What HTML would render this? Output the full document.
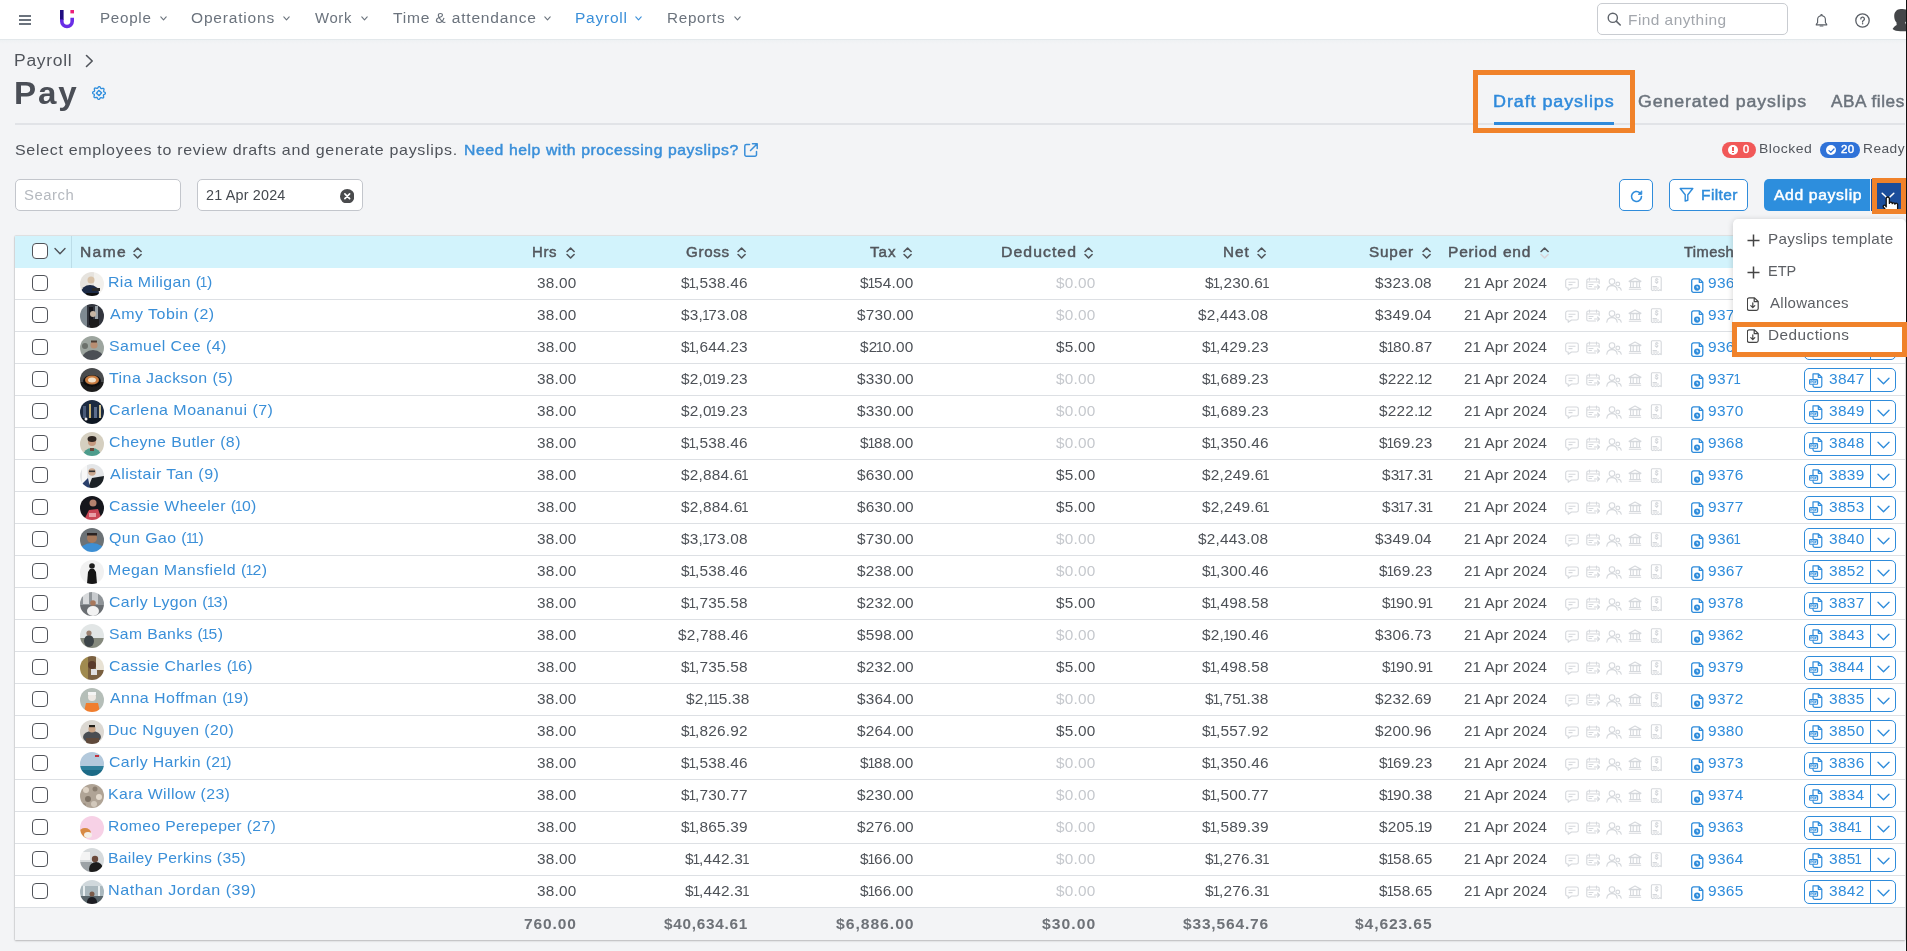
<!DOCTYPE html><html><head><meta charset='utf-8'><title>Pay</title><style>
*{box-sizing:border-box}
html,body{margin:0;padding:0}
body{width:1907px;height:951px;overflow:hidden;background:#f3f4f6;position:relative;font-family:"Liberation Sans",sans-serif;color:#4b4f56}
.a{position:absolute;white-space:nowrap}
svg{display:block}
#nav{position:absolute;left:0;top:0;width:1907px;height:40px;background:#fff;border-bottom:1px solid #e3e8eb}
.ham{position:absolute;left:19px;width:12px;height:2px;background:#6b737d}
.nv{position:absolute;top:10px;font-size:14px;line-height:16px;color:#6b737d;letter-spacing:1.1px}
.chev{position:absolute;top:16px}
#find{position:absolute;left:1597px;top:3px;width:191px;height:32px;border:1px solid #c9ccd1;border-radius:5px;background:#fff}
.tabline{position:absolute;left:15px;top:123px;width:1890px;height:2px;background:#e1e3e7}
.tab{position:absolute;top:93px;font-size:16px;line-height:18px;font-weight:700;letter-spacing:0.9px;color:#6b737c}
.inp{position:absolute;top:179px;height:32px;border:1px solid #c3c6cc;border-radius:5px;background:#fff}
.btn{position:absolute;top:179px;height:32px;border:1px solid #2f8cdb;border-radius:5px;background:#fff}
#tbl{position:absolute;left:15px;top:236px;width:1890px;height:704px;background:#fff;box-shadow:0 1px 2px rgba(0,0,0,.22),-1px 0 0 rgba(0,0,0,.06)}
#thead{position:absolute;left:0;top:0;width:1890px;height:32px;background:#d3f2fb}
.th{position:absolute;top:9px;font-size:14px;line-height:16px;font-weight:700;color:#52565c;letter-spacing:0.7px}
.row{position:absolute;left:0;width:1890px;height:32px;border-bottom:1px solid #e3e6ea}
.cb{position:absolute;left:17px;width:16px;height:16px;border:1.5px solid #505359;border-radius:4px;background:#fff}
.av{position:absolute;left:65px;top:4px;width:24px;height:24px;border-radius:50%}
.nm{position:absolute;left:94px;top:6px;font-size:14px;line-height:16px;color:#3a8fd8;letter-spacing:0.9px}
.v{position:absolute;top:8px;font-size:14px;line-height:16px;color:#4b4f56;letter-spacing:0.5px;text-align:right}
.v0{color:#c3c6cb}
.ic{position:absolute;top:0}
.ts{position:absolute;left:1676px;top:8px}
.tsn{position:absolute;left:1692px;top:8px;font-size:14px;line-height:16px;color:#2f8cdb;letter-spacing:0.6px}
.ps{position:absolute;left:1789px;top:4px;width:92px;height:24px;border:1px solid #2f8cdb;border-radius:5px;background:#fff}
.tot{position:absolute;top:680px;left:0;width:1890px;height:32px;background:#f3f4f6}
.tv{position:absolute;top:8px;font-size:14px;line-height:16px;font-weight:700;color:#6b6f76;letter-spacing:0.9px}
.obox{position:absolute;border:5px solid #f0822a}
#menu{position:absolute;left:1733px;top:219px;width:173px;height:133px;background:#fff;border-radius:5px;box-shadow:0 2px 8px rgba(0,0,0,.15)}
.mi{position:absolute;left:36px;font-size:14px;line-height:16px;color:#585b60;letter-spacing:0.7px}
</style></head><body><svg width="0" height="0" style="position:absolute">
<defs><clipPath id="avc"><circle cx="12" cy="12" r="12"/></clipPath><filter id="avb" x="-10%" y="-10%" width="120%" height="120%"><feGaussianBlur stdDeviation=".45"/></filter>
<symbol id="sort" viewBox="0 0 9 12"><path d="M1 4.5L4.5 1L8 4.5M1 7.5L4.5 11L8 7.5" fill="none" stroke="currentColor" stroke-width="1.6" stroke-linecap="round" stroke-linejoin="round"/></symbol>
<symbol id="sortup" viewBox="0 0 9 12"><path d="M1 4.5L4.5 1L8 4.5" fill="none" stroke="#52565c" stroke-width="1.6" stroke-linecap="round" stroke-linejoin="round"/><path d="M1 7.5L4.5 11L8 7.5" fill="none" stroke="#d9d3d8" stroke-width="1.6" stroke-linecap="round" stroke-linejoin="round"/></symbol>
<symbol id="chd" viewBox="0 0 12 8"><path d="M1 1.5L6 6.5L11 1.5" fill="none" stroke="currentColor" stroke-width="1.5" stroke-linecap="round" stroke-linejoin="round"/></symbol>
<symbol id="chat" viewBox="0 0 14 13"><path d="M2.5 1h9A1.8 1.8 0 0 1 13.3 2.8v5.4A1.8 1.8 0 0 1 11.5 10H6.5L3.2 12.3V10H2.5A1.8 1.8 0 0 1 .7 8.2V2.8A1.8 1.8 0 0 1 2.5 1z M3.5 4.2h7 M3.5 6.6h4" fill="none" stroke="currentColor" stroke-width="1.1" stroke-linejoin="round"/></symbol>
<symbol id="cal" viewBox="0 0 14 14"><path d="M9.5 12H2.3A1.5 1.5 0 0 1 .8 10.5V3.5A1.5 1.5 0 0 1 2.3 2h9.4a1.5 1.5 0 0 1 1.5 1.5v3 M3.5 1v2.2 M10.5 1v2.2 M.8 5h12.4 M3 7.5h4 M3 9.5h2.5 M8.5 10h5 M11.5 8l2 2-2 2" fill="none" stroke="currentColor" stroke-width="1.1" stroke-linecap="round" stroke-linejoin="round"/></symbol>
<symbol id="ppl" viewBox="0 0 16 13"><circle cx="6" cy="3.6" r="2.8" fill="none" stroke="currentColor" stroke-width="1.1"/><path d="M.8 12.2c.3-3 2.3-4.6 5.2-4.6s4.9 1.6 5.2 4.6" fill="none" stroke="currentColor" stroke-width="1.1" stroke-linecap="round"/><circle cx="11.8" cy="6" r="1.9" fill="none" stroke="currentColor" stroke-width="1.1"/><path d="M12.3 9.3c1.7.2 2.7 1.3 2.9 3" fill="none" stroke="currentColor" stroke-width="1.1" stroke-linecap="round"/></symbol>
<symbol id="bank" viewBox="0 0 14 13"><path d="M1 4.2L7 1l6 3.2z M1 4.6h12 M2.6 5v5 M5.2 5v5 M8.8 5v5 M11.4 5v5 M1.3 10.5h11.4 M.8 12.3h12.4" fill="none" stroke="currentColor" stroke-width="1.1" stroke-linejoin="round"/></symbol>
<symbol id="rcpt" viewBox="0 0 12 16"><path d="M2.2 .8h7.6a1.4 1.4 0 0 1 1.4 1.4V14.6l-1.4-.9-1.4.9-1.4-.9-1.4.9-1.4-.9-1.4.9-1.4-.9V2.2A1.4 1.4 0 0 1 2.2.8z M3 10.5h3.5 M3 12h5.5 M8 3.5c-.3-.5-.9-.7-1.5-.6-.7.1-1 .6-.9 1 .1.5.6.6 1.2.8.7.2 1.2.5 1.1 1.1-.1.6-.8.9-1.5.8-.6-.1-1-.4-1.2-.8 M6.8 2.2v.7 M6.8 6.8v.7" fill="none" stroke="currentColor" stroke-width="1.1" stroke-linecap="round" stroke-linejoin="round"/></symbol>
<symbol id="tsic" viewBox="0 0 13 15"><path d="M2.5 .9h6l3.3 3.3v8.3A1.8 1.8 0 0 1 10 14.3H2.5A1.8 1.8 0 0 1 .7 12.5V2.7A1.8 1.8 0 0 1 2.5.9z M8.3 1v3.3h3.3" fill="none" stroke="currentColor" stroke-width="1.3" stroke-linejoin="round"/><circle cx="6.1" cy="9.6" r="3.1" fill="currentColor"/><path d="M6.1 8v1.8h1.3" fill="none" stroke="#fff" stroke-width=".9"/></symbol>
<symbol id="pdf" viewBox="0 0 15 15"><path d="M4 .9h5.5l3.3 3.3v8.3A1.8 1.8 0 0 1 11 14.3H5.8A1.8 1.8 0 0 1 4 12.5z M9.3 1v3.3h3.3" fill="none" stroke="currentColor" stroke-width="1.2" stroke-linejoin="round"/><rect x=".6" y="6.6" width="8" height="4.6" rx=".8" fill="#fff" stroke="currentColor" stroke-width="1.1"/><path d="M1.8 10V7.8h1.1a.6.6 0 0 1 0 1.2H1.8 M4.2 10V7.8h.8a1.1 1.1 0 0 1 0 2.2z M6.6 10V7.8h1.3 M6.6 8.9h1" fill="none" stroke="currentColor" stroke-width=".7"/></symbol>
<symbol id="fdl" viewBox="0 0 12 14"><path d="M2.2 .8h5.3l3.7 3.7v7a1.8 1.8 0 0 1-1.8 1.8H2.2A1.8 1.8 0 0 1 .4 11.5V2.6A1.8 1.8 0 0 1 2.2.8z M7.2 .9v3.8h3.9 M5.8 5.8v4.6 M3.8 8.6l2 2 2-2" fill="none" stroke="currentColor" stroke-width="1.2" stroke-linecap="round" stroke-linejoin="round"/></symbol>
<symbol id="plus" viewBox="0 0 13 13"><path d="M6.5 .5v12 M.5 6.5h12" fill="none" stroke="currentColor" stroke-width="1.5"/></symbol>
</defs></svg><div id="nav"></div><div class="a" style="left:0;top:40px;width:1907px;height:4px;background:linear-gradient(#eef1f3,#f3f4f6)"></div><div class="ham" style="top:15px"></div><div class="ham" style="top:19px"></div><div class="ham" style="top:23px"></div><svg class="a" style="left:59px;top:9px" width="16" height="20" viewBox="0 0 16 20">
<path d="M1 1.2h3.6v9.3" fill="none" stroke="#1d0a7e" stroke-width="0" />
<rect x="1" y="1" width="3.6" height="10" fill="#1f0d80"/>
<path d="M1 10.5v1.8a6 6 0 0 0 14 0v-3.6h-3.6v3.6a2.4 2.4 0 0 1-6.8 0v-1.8z" fill="#6a2ee6"/>
<rect x="11.4" y="1" width="3.6" height="3.4" fill="#ec1f7a"/>
</svg><div class="a" style="left:99.62px;top:11px;font-size:14px;line-height:14px;color:#6b737d;letter-spacing:0.655px;transform:scaleX(1.0845);transform-origin:0 0;will-change:transform;">People</div><svg class="a" style="left:159.8px;top:16px" width="7" height="5" viewBox="0 0 7 5"><path d="M.8 .9L3.5 3.8L6.2 .9" fill="none" stroke="#6b737d" stroke-width="1.1" stroke-linecap="round" stroke-linejoin="round"/></svg><div class="a" style="left:190.55px;top:11px;font-size:14px;line-height:14px;color:#6b737d;letter-spacing:0.736px;transform:scaleX(1.1089);transform-origin:0 0;will-change:transform;">Operations</div><svg class="a" style="left:282.8px;top:16px" width="7" height="5" viewBox="0 0 7 5"><path d="M.8 .9L3.5 3.8L6.2 .9" fill="none" stroke="#6b737d" stroke-width="1.1" stroke-linecap="round" stroke-linejoin="round"/></svg><div class="a" style="left:314.60px;top:11px;font-size:14px;line-height:14px;color:#6b737d;letter-spacing:0.628px;transform:scaleX(1.0615);transform-origin:0 0;will-change:transform;">Work</div><svg class="a" style="left:360.5px;top:16px" width="7" height="5" viewBox="0 0 7 5"><path d="M.8 .9L3.5 3.8L6.2 .9" fill="none" stroke="#6b737d" stroke-width="1.1" stroke-linecap="round" stroke-linejoin="round"/></svg><div class="a" style="left:392.82px;top:11px;font-size:14px;line-height:14px;color:#6b737d;letter-spacing:0.727px;transform:scaleX(1.1112);transform-origin:0 0;will-change:transform;">Time &amp; attendance</div><svg class="a" style="left:544.3px;top:16px" width="7" height="5" viewBox="0 0 7 5"><path d="M.8 .9L3.5 3.8L6.2 .9" fill="none" stroke="#6b737d" stroke-width="1.1" stroke-linecap="round" stroke-linejoin="round"/></svg><div class="a" style="left:575.49px;top:11px;font-size:14px;line-height:14px;color:#3a8fd9;letter-spacing:0.669px;transform:scaleX(1.1085);transform-origin:0 0;will-change:transform;">Payroll</div><svg class="a" style="left:635.2px;top:16px" width="7" height="5" viewBox="0 0 7 5"><path d="M.8 .9L3.5 3.8L6.2 .9" fill="none" stroke="#3a8fd9" stroke-width="1.1" stroke-linecap="round" stroke-linejoin="round"/></svg><div class="a" style="left:666.51px;top:11px;font-size:14px;line-height:14px;color:#6b737d;letter-spacing:0.643px;transform:scaleX(1.0884);transform-origin:0 0;will-change:transform;">Reports</div><svg class="a" style="left:733.7px;top:16px" width="7" height="5" viewBox="0 0 7 5"><path d="M.8 .9L3.5 3.8L6.2 .9" fill="none" stroke="#6b737d" stroke-width="1.1" stroke-linecap="round" stroke-linejoin="round"/></svg><div id="find"></div><svg class="a" style="left:1607px;top:12px" width="15" height="14" viewBox="0 0 15 14"><circle cx="5.8" cy="5.8" r="4.6" fill="none" stroke="#5f646b" stroke-width="1.4"/><path d="M9.2 9.2L13.2 13" stroke="#5f646b" stroke-width="1.6" stroke-linecap="round"/></svg><div class="a" style="left:1627.67px;top:13px;font-size:14.5px;line-height:14.5px;color:#a3a7ad;letter-spacing:0.430px;transform:scaleX(1.0647);transform-origin:0 0;will-change:transform;">Find anything</div><svg class="a" style="left:1814.5px;top:12.5px" width="13" height="15" viewBox="0 0 16 17"><path d="M8 1.2c.5 0 .8.3.8.8v.6c2.4.4 4 2.4 4 4.9v3.6l1.6 2v.8H1.6v-.8l1.6-2V7.5c0-2.5 1.6-4.5 4-4.9V2c0-.5.3-.8.8-.8z" fill="none" stroke="#5a5f66" stroke-width="1.4" stroke-linejoin="round"/><path d="M6.3 15.2h3.4" fill="none" stroke="#5a5f66" stroke-width="1.4" stroke-linecap="round"/></svg><svg class="a" style="left:1855px;top:12.5px" width="15" height="15" viewBox="0 0 15 15"><circle cx="7.5" cy="7.5" r="6.7" fill="none" stroke="#5a5f66" stroke-width="1.3"/><path d="M5.8 5.9a1.8 1.8 0 1 1 2.6 1.6c-.5.3-.8.6-.8 1.1v.5" fill="none" stroke="#5a5f66" stroke-width="1.3" stroke-linecap="round"/><circle cx="7.6" cy="10.7" r=".75" fill="#5a5f66"/></svg><svg class="a" style="left:1891px;top:8px" width="16" height="24" viewBox="0 0 16 24"><path d="M9.8 1.1C6 1.1 3.2 3.9 3.2 8c0 2.8.9 5 2.2 6.3l.3 2.6c-1.7.9-3.4 2.4-4.1 4.2 1.6 1.6 4.6 2.2 7.8 2.2H16V2c-1.5-.6-3.8-.9-6.2-.9z" fill="#444649"/><path d="M14.2 14.3c.3 1.3.9 2.6 1.8 3.4V12.5c-.6.7-1.2 1.3-1.8 1.8z" fill="#fff"/></svg><div class="a" style="left:14.03px;top:53px;font-size:16px;line-height:16px;color:#50545b;letter-spacing:0.656px;transform:scaleX(1.0925);transform-origin:0 0;will-change:transform;">Payroll</div><svg class="a" style="left:85px;top:54px" width="9" height="14" viewBox="0 0 9 14"><path d="M1.5 1.5L7.2 7L1.5 12.5" fill="none" stroke="#50545b" stroke-width="1.6" stroke-linecap="round" stroke-linejoin="round"/></svg><div class="a" style="left:14.26px;top:78px;font-size:31px;line-height:31px;font-weight:700;color:#4a4e56;letter-spacing:1.729px;transform:scaleX(1.0698);transform-origin:0 0;will-change:transform;">Pay</div><svg class="a" style="left:92px;top:86px" width="14" height="14" viewBox="0 0 14 14"><path d="M13.45 7.00 L13.47 7.42 L13.26 7.82 L12.86 8.17 L12.37 8.44 L11.91 8.67 L11.57 8.89 L11.41 9.17 L11.41 9.54 L11.51 10.01 L11.63 10.55 L11.67 11.10 L11.56 11.56 L11.28 11.88 L10.84 12.01 L10.32 11.97 L9.78 11.82 L9.29 11.65 L8.89 11.57 L8.58 11.65 L8.32 11.91 L8.06 12.32 L7.76 12.79 L7.41 13.20 L7.00 13.45 L6.58 13.47 L6.18 13.26 L5.83 12.86 L5.56 12.37 L5.33 11.91 L5.11 11.57 L4.83 11.41 L4.46 11.41 L3.99 11.51 L3.45 11.63 L2.90 11.67 L2.44 11.56 L2.12 11.28 L1.99 10.84 L2.03 10.32 L2.18 9.78 L2.35 9.29 L2.43 8.89 L2.35 8.58 L2.09 8.32 L1.68 8.06 L1.21 7.76 L0.80 7.41 L0.55 7.00 L0.53 6.58 L0.74 6.18 L1.14 5.83 L1.63 5.56 L2.09 5.33 L2.43 5.11 L2.59 4.83 L2.59 4.46 L2.49 3.99 L2.37 3.45 L2.33 2.90 L2.44 2.44 L2.72 2.12 L3.16 1.99 L3.68 2.03 L4.22 2.18 L4.71 2.35 L5.11 2.43 L5.42 2.35 L5.68 2.09 L5.94 1.68 L6.24 1.21 L6.59 0.80 L7.00 0.55 L7.42 0.53 L7.82 0.74 L8.17 1.14 L8.44 1.63 L8.67 2.09 L8.89 2.43 L9.17 2.59 L9.54 2.59 L10.01 2.49 L10.55 2.37 L11.10 2.33 L11.56 2.44 L11.88 2.72 L12.01 3.16 L11.97 3.68 L11.82 4.22 L11.65 4.71 L11.57 5.11 L11.65 5.42 L11.91 5.68 L12.32 5.94 L12.79 6.24 L13.20 6.59z" fill="none" stroke="#2f8edd" stroke-width="1.3" stroke-linejoin="round"/><path d="M9.59 6.77 L7.23 9.59 L4.41 7.23 L6.77 4.41z" fill="none" stroke="#2f8edd" stroke-width="1.4" stroke-linejoin="round"/></svg><div class="tabline"></div><div class="a" style="left:1493.05px;top:94px;font-size:16px;line-height:16px;font-weight:400;-webkit-text-stroke:.45px currentColor;color:#2f8adb;letter-spacing:0.808px;transform:scaleX(1.1233);transform-origin:0 0;will-change:transform;">Draft payslips</div><div class="a" style="left:1494px;top:122px;width:120px;height:3px;background:#2f8adb"></div><div class="a" style="left:1638.02px;top:94px;font-size:16px;line-height:16px;font-weight:400;-webkit-text-stroke:.45px currentColor;color:#6b737c;letter-spacing:0.801px;transform:scaleX(1.1104);transform-origin:0 0;will-change:transform;">Generated payslips</div><div class="a" style="left:1831.24px;top:94px;font-size:16px;line-height:16px;font-weight:400;-webkit-text-stroke:.45px currentColor;color:#6b737c;letter-spacing:0.539px;transform:scaleX(1.0723);transform-origin:0 0;will-change:transform;">ABA files</div><div class="obox" style="left:1473px;top:70px;width:162px;height:63px"></div><div class="a" style="left:14.67px;top:143px;font-size:14.5px;line-height:14.5px;color:#4f535a;letter-spacing:0.620px;transform:scaleX(1.1032);transform-origin:0 0;will-change:transform;">Select employees to review drafts and generate payslips.</div><div class="a" style="left:464.49px;top:143px;font-size:14.5px;line-height:14.5px;font-weight:400;-webkit-text-stroke:.45px currentColor;color:#3a8fd9;letter-spacing:0.536px;transform:scaleX(1.0847);transform-origin:0 0;will-change:transform;">Need help with processing payslips?</div><svg class="a" style="left:743px;top:142px" width="16" height="16" viewBox="0 0 16 16"><path d="M6.5 2.5H3.3a1.5 1.5 0 0 0-1.5 1.5v8.7a1.5 1.5 0 0 0 1.5 1.5H12a1.5 1.5 0 0 0 1.5-1.5V9.5 M9.5 1.8h4.7v4.7 M14 2L7.5 8.5" fill="none" stroke="#3a8fd9" stroke-width="1.5" stroke-linecap="round" stroke-linejoin="round"/></svg><div class="a" style="left:1722px;top:142px;width:34px;height:16px;border-radius:8px;background:#f15858"></div><div class="a" style="left:1727.5px;top:144.8px;width:10.5px;height:10.5px;border-radius:50%;background:#fff"></div><div class="a" style="left:1732.1px;top:146.6px;width:1.6px;height:4.2px;background:#f15858"></div><div class="a" style="left:1732.1px;top:151.8px;width:1.6px;height:1.6px;background:#f15858"></div><div class="a" style="left:1743.32px;top:144px;font-size:11px;line-height:11px;font-weight:400;-webkit-text-stroke:.45px currentColor;color:#fff;letter-spacing:0.000px;will-change:transform;">0</div><div class="a" style="left:1758.63px;top:142px;font-size:13px;line-height:13px;color:#52565d;letter-spacing:0.505px;transform:scaleX(1.0730);transform-origin:0 0;will-change:transform;">Blocked</div><div class="a" style="left:1820px;top:142px;width:40px;height:16px;border-radius:8px;background:#2f72d8"></div><div class="a" style="left:1825.7px;top:144.8px;width:10.5px;height:10.5px;border-radius:50%;background:#fff"></div><svg class="a" style="left:1825.7px;top:144.8px" width="11" height="11" viewBox="0 0 11 11"><path d="M3 5.6l1.8 1.8L8 4" fill="none" stroke="#2f72d8" stroke-width="1.3" stroke-linecap="round" stroke-linejoin="round"/></svg><div class="a" style="left:1840.71px;top:144px;font-size:11px;line-height:11px;font-weight:400;-webkit-text-stroke:.45px currentColor;color:#fff;letter-spacing:0.433px;transform:scaleX(1.0385);transform-origin:0 0;will-change:transform;">20</div><div class="a" style="left:1862.65px;top:142px;font-size:13px;line-height:13px;color:#52565d;letter-spacing:0.463px;transform:scaleX(1.0534);transform-origin:0 0;will-change:transform;">Ready</div><div class="inp" style="left:15px;width:166px"></div><div class="a" style="left:23.50px;top:188px;font-size:14px;line-height:14px;color:#b5b9bf;letter-spacing:0.495px;transform:scaleX(1.0614);transform-origin:0 0;will-change:transform;">Search</div><div class="inp" style="left:197px;width:166px"></div><div class="a" style="left:205.53px;top:188px;font-size:14px;line-height:14px;color:#45494f;letter-spacing:0.185px;transform:scaleX(1.0255);transform-origin:0 0;will-change:transform;">21 Apr 2024</div><svg class="a" style="left:339.8px;top:188.8px" width="14.5" height="14.5" viewBox="0 0 14 14"><circle cx="7" cy="7" r="7" fill="#4a4b4d"/><path d="M4.7 4.7l4.6 4.6M9.3 4.7L4.7 9.3" stroke="#fff" stroke-width="1.6" stroke-linecap="round"/></svg><div class="btn" style="left:1619px;width:34px"></div><svg class="a" style="left:1628.5px;top:188.5px" width="15" height="15" viewBox="0 0 15 15"><path d="M12.5 7.5a5 5 0 1 1-1.6-3.7" fill="none" stroke="#2f8cdb" stroke-width="1.6" stroke-linecap="round"/><path d="M12.8 1.8v3.6H9.2z" fill="#2f8cdb" stroke="#2f8cdb" stroke-width=".8" stroke-linejoin="round"/></svg><div class="btn" style="left:1669px;width:79px"></div><svg class="a" style="left:1678.5px;top:187px" width="15" height="15" viewBox="0 0 15 15"><path d="M1.2 1.5h12.6L8.8 7.7v5.6L6.2 14V7.7z" fill="none" stroke="#2f8cdb" stroke-width="1.4" stroke-linejoin="round"/></svg><div class="a" style="left:1700.91px;top:188px;font-size:14.5px;line-height:14.5px;font-weight:400;-webkit-text-stroke:.45px currentColor;color:#2f8cdb;letter-spacing:0.398px;transform:scaleX(1.0676);transform-origin:0 0;will-change:transform;">Filter</div><div class="a" style="left:1764px;top:179px;width:107px;height:32px;background:#2d8edd;border-radius:5px 0 0 5px"></div><div class="a" style="left:1870px;top:179px;width:1px;height:32px;background:#eef5fb"></div><div class="a" style="left:1871px;top:179px;width:1px;height:32px;background:#1c4e9b"></div><div class="a" style="left:1773.74px;top:188px;font-size:14.5px;line-height:14.5px;font-weight:400;-webkit-text-stroke:.45px currentColor;color:#fff;letter-spacing:0.579px;transform:scaleX(1.0837);transform-origin:0 0;will-change:transform;">Add payslip</div><div class="a" style="left:1872px;top:178px;width:35px;height:36px;background:#f0822a"></div><div class="a" style="left:1877px;top:183px;width:24px;height:26px;background:#1c4e9b"></div><svg class="a" style="left:1881px;top:191.5px" width="14" height="8" viewBox="0 0 14 8"><path d="M1.2 1.2L7 6.8L12.8 1.2" fill="none" stroke="#fff" stroke-width="1.5" stroke-linecap="round"/></svg><div class="a" style="left:1906px;top:0;width:1px;height:951px;background:#111"></div><div class="a" style="left:15px;top:236px;width:1890px;height:704px;background:#fff;box-shadow:0 0 1.5px rgba(0,0,0,.28),0 1px 2px rgba(0,0,0,.18)"></div><div class="a" style="left:15px;top:236px;width:1890px;height:32px;background:#d2f3fc"></div><div class="a" style="left:71px;top:236px;width:1px;height:32px;background:#bcdde8"></div><div class="a" style="left:32px;top:243px;width:16px;height:16px;border:1.5px solid #505359;border-radius:4px;background:#fff"></div><svg class="a" style="left:53.5px;top:247px" width="12" height="9" viewBox="0 0 12 9"><path d="M1 1.5L6 6.8L11 1.5" fill="none" stroke="#505359" stroke-width="1.4" stroke-linecap="round" stroke-linejoin="round"/></svg><div class="a" style="left:79.64px;top:245px;font-size:14px;line-height:14px;font-weight:400;-webkit-text-stroke:.45px currentColor;color:#52565c;letter-spacing:1.228px;transform:scaleX(1.1133);transform-origin:0 0;will-change:transform;">Name</div><svg class="a" style="left:133.4px;top:247.3px" width="9.2" height="12" viewBox="0 0 9 12"><use href="#sort" style="color:#52565c"/></svg><div class="a" style="left:532.47px;top:245px;font-size:14px;line-height:14px;font-weight:400;-webkit-text-stroke:.45px currentColor;color:#52565c;letter-spacing:0.634px;transform:scaleX(1.0652);transform-origin:0 0;will-change:transform;">Hrs</div><svg class="a" style="left:565.6px;top:247.3px" width="9.2" height="12" viewBox="0 0 9 12"><use href="#sort" style="color:#52565c"/></svg><div class="a" style="left:685.63px;top:245px;font-size:14px;line-height:14px;font-weight:400;-webkit-text-stroke:.45px currentColor;color:#52565c;letter-spacing:0.666px;transform:scaleX(1.0789);transform-origin:0 0;will-change:transform;">Gross</div><svg class="a" style="left:737.3px;top:247.3px" width="9.2" height="12" viewBox="0 0 9 12"><use href="#sort" style="color:#52565c"/></svg><div class="a" style="left:869.77px;top:245px;font-size:14px;line-height:14px;font-weight:400;-webkit-text-stroke:.45px currentColor;color:#52565c;letter-spacing:0.852px;transform:scaleX(1.0853);transform-origin:0 0;will-change:transform;">Tax</div><svg class="a" style="left:903.2px;top:247.3px" width="9.2" height="12" viewBox="0 0 9 12"><use href="#sort" style="color:#52565c"/></svg><div class="a" style="left:1001.13px;top:245px;font-size:14px;line-height:14px;font-weight:400;-webkit-text-stroke:.45px currentColor;color:#52565c;letter-spacing:0.944px;transform:scaleX(1.1269);transform-origin:0 0;will-change:transform;">Deducted</div><svg class="a" style="left:1084.4px;top:247.3px" width="9.2" height="12" viewBox="0 0 9 12"><use href="#sort" style="color:#52565c"/></svg><div class="a" style="left:1222.85px;top:245px;font-size:14px;line-height:14px;font-weight:400;-webkit-text-stroke:.45px currentColor;color:#52565c;letter-spacing:0.893px;transform:scaleX(1.0920);transform-origin:0 0;will-change:transform;">Net</div><svg class="a" style="left:1257.2px;top:247.3px" width="9.2" height="12" viewBox="0 0 9 12"><use href="#sort" style="color:#52565c"/></svg><div class="a" style="left:1369.03px;top:245px;font-size:14px;line-height:14px;font-weight:400;-webkit-text-stroke:.45px currentColor;color:#52565c;letter-spacing:0.763px;transform:scaleX(1.0900);transform-origin:0 0;will-change:transform;">Super</div><svg class="a" style="left:1422.1px;top:247.3px" width="9.2" height="12" viewBox="0 0 9 12"><use href="#sort" style="color:#52565c"/></svg><div class="a" style="left:1448.04px;top:245px;font-size:14px;line-height:14px;font-weight:400;-webkit-text-stroke:.45px currentColor;color:#52565c;letter-spacing:0.729px;transform:scaleX(1.1095);transform-origin:0 0;will-change:transform;">Period end</div><svg class="a" style="left:1539.5px;top:247.3px" width="9.2" height="12" viewBox="0 0 9 12"><use href="#sortup" style="color:#52565c"/></svg><div class="a" style="left:1684.47px;top:245px;font-size:14px;line-height:14px;font-weight:400;-webkit-text-stroke:.45px currentColor;color:#52565c;letter-spacing:0.381px;transform:scaleX(1.0493);transform-origin:0 0;will-change:transform;">Timesheet</div><div class="a" style="left:15px;top:299px;width:1890px;height:1px;background:#dde0e4"></div><div class="a" style="left:32px;top:275px;width:16px;height:16px;border:1.5px solid #505359;border-radius:4px;background:#fff"></div><svg class="a" style="left:80px;top:272px" width="24" height="24" viewBox="0 0 24 24"><g clip-path="url(#avc)"><g filter="url(#avb)"><rect width="24" height="24" fill="#e6e3de"/><rect x="14" y="0" width="10" height="24" fill="#f2f0ec"/><ellipse cx="10" cy="21" rx="9" ry="8" fill="#1f2a45"/><circle cx="11" cy="8" r="3.5" fill="#d8c2a8"/><rect x="12" y="16" width="8" height="3" fill="#2b2b2b"/><rect x="6" y="21" width="12" height="3" fill="#111"/></g></g></svg><div class="a" style="left:108.18px;top:274px;font-size:15px;line-height:15px;color:#3a8fd8;letter-spacing:0.367px;transform:scaleX(1.0598);transform-origin:0 0;will-change:transform;">Ria Miligan (<span style="display:inline-block;transform:scaleX(.85);margin:0 -1.70px">1</span>)</div><div class="a" style="left:536.69px;top:275px;font-size:15px;line-height:15px;color:#4d5157;letter-spacing:0.196px;transform:scaleX(1.0219);transform-origin:0 0;will-change:transform;">38.00</div><div class="a" style="left:681.14px;top:275px;font-size:15px;line-height:15px;color:#4d5157;letter-spacing:0.195px;transform:scaleX(1.0256);transform-origin:0 0;will-change:transform;">$<span style="display:inline-block;transform:scaleX(.85);margin:0 -1.70px">1</span>,538.46</div><div class="a" style="left:860.44px;top:275px;font-size:15px;line-height:15px;color:#4d5157;letter-spacing:0.195px;transform:scaleX(1.0240);transform-origin:0 0;will-change:transform;">$<span style="display:inline-block;transform:scaleX(.85);margin:0 -1.70px">1</span>54.00</div><div class="a" style="left:1055.89px;top:275px;font-size:15px;line-height:15px;color:#c5c8cd;letter-spacing:0.196px;transform:scaleX(1.0218);transform-origin:0 0;will-change:transform;">$0.00</div><div class="a" style="left:1205.04px;top:275px;font-size:15px;line-height:15px;color:#4d5157;letter-spacing:0.195px;transform:scaleX(1.0270);transform-origin:0 0;will-change:transform;">$<span style="display:inline-block;transform:scaleX(.85);margin:0 -1.70px">1</span>,230.6<span style="display:inline-block;transform:scaleX(.85);margin:0 -1.70px">1</span></div><div class="a" style="left:1375.14px;top:275px;font-size:15px;line-height:15px;color:#4d5157;letter-spacing:0.196px;transform:scaleX(1.0224);transform-origin:0 0;will-change:transform;">$323.08</div><div class="a" style="left:1464.14px;top:275px;font-size:15px;line-height:15px;color:#4d5157;letter-spacing:0.101px;transform:scaleX(1.0129);transform-origin:0 0;will-change:transform;">21 Apr 2024</div><svg class="a" style="left:1565px;top:277.5px;color:#d5d8dc;" width="14" height="13"><use href="#chat"/></svg><svg class="a" style="left:1586px;top:277px;color:#d5d8dc;" width="14" height="14"><use href="#cal"/></svg><svg class="a" style="left:1606px;top:277.5px;color:#d5d8dc;" width="16" height="13"><use href="#ppl"/></svg><svg class="a" style="left:1628px;top:277px;color:#d5d8dc;" width="14" height="13"><use href="#bank"/></svg><svg class="a" style="left:1650px;top:276px;color:#d5d8dc;" width="12" height="16"><use href="#rcpt"/></svg><svg class="a" style="left:1690.5px;top:277.5px;color:#2f8cdb;" width="13" height="15"><use href="#tsic"/></svg><div class="a" style="left:1707.63px;top:275px;font-size:15px;line-height:15px;color:#2f8cdb;letter-spacing:0.292px;transform:scaleX(1.0281);transform-origin:0 0;will-change:transform;">9369</div><div class="a" style="left:1804px;top:272px;width:92px;height:24px;border:1px solid #2f8cdb;border-radius:5px;background:#fff"></div><div class="a" style="left:1870px;top:272px;width:1px;height:24px;background:#2f8cdb"></div><svg class="a" style="left:1808.5px;top:277px;color:#2f8cdb;" width="15" height="15"><use href="#pdf"/></svg><div class="a" style="left:1828.89px;top:275px;font-size:15px;line-height:15px;color:#2f8cdb;letter-spacing:0.292px;transform:scaleX(1.0279);transform-origin:0 0;will-change:transform;">3846</div><svg class="a" style="left:1876.5px;top:281px" width="13" height="8" viewBox="0 0 13 8"><path d="M1 1.2L6.5 6.7L12 1.2" fill="none" stroke="#2f8cdb" stroke-width="1.4" stroke-linecap="round" stroke-linejoin="round"/></svg><div class="a" style="left:15px;top:331px;width:1890px;height:1px;background:#dde0e4"></div><div class="a" style="left:32px;top:307px;width:16px;height:16px;border:1.5px solid #505359;border-radius:4px;background:#fff"></div><svg class="a" style="left:80px;top:304px" width="24" height="24" viewBox="0 0 24 24"><g clip-path="url(#avc)"><g filter="url(#avb)"><rect width="24" height="24" fill="#30363c"/><rect x="0" y="0" width="7" height="24" fill="#7f8a92"/><rect x="9" y="3" width="4" height="18" fill="#15181b"/><rect x="15" y="2" width="3" height="20" fill="#9aa2a8"/><circle cx="13" cy="10" r="3" fill="#c7b5a3"/><rect x="10" y="15" width="9" height="9" fill="#1a1c1f"/></g></g></svg><div class="a" style="left:109.50px;top:306px;font-size:15px;line-height:15px;color:#3a8fd8;letter-spacing:0.460px;transform:scaleX(1.0644);transform-origin:0 0;will-change:transform;">Amy Tobin (2)</div><div class="a" style="left:536.69px;top:307px;font-size:15px;line-height:15px;color:#4d5157;letter-spacing:0.196px;transform:scaleX(1.0219);transform-origin:0 0;will-change:transform;">38.00</div><div class="a" style="left:681.14px;top:307px;font-size:15px;line-height:15px;color:#4d5157;letter-spacing:0.195px;transform:scaleX(1.0256);transform-origin:0 0;will-change:transform;">$3,<span style="display:inline-block;transform:scaleX(.85);margin:0 -1.70px">1</span>73.08</div><div class="a" style="left:857.04px;top:307px;font-size:15px;line-height:15px;color:#4d5157;letter-spacing:0.196px;transform:scaleX(1.0224);transform-origin:0 0;will-change:transform;">$730.00</div><div class="a" style="left:1055.89px;top:307px;font-size:15px;line-height:15px;color:#c5c8cd;letter-spacing:0.196px;transform:scaleX(1.0218);transform-origin:0 0;will-change:transform;">$0.00</div><div class="a" style="left:1198.24px;top:307px;font-size:15px;line-height:15px;color:#4d5157;letter-spacing:0.195px;transform:scaleX(1.0242);transform-origin:0 0;will-change:transform;">$2,443.08</div><div class="a" style="left:1374.89px;top:307px;font-size:15px;line-height:15px;color:#4d5157;letter-spacing:0.196px;transform:scaleX(1.0223);transform-origin:0 0;will-change:transform;">$349.04</div><div class="a" style="left:1464.14px;top:307px;font-size:15px;line-height:15px;color:#4d5157;letter-spacing:0.101px;transform:scaleX(1.0129);transform-origin:0 0;will-change:transform;">21 Apr 2024</div><svg class="a" style="left:1565px;top:309.5px;color:#d5d8dc;" width="14" height="13"><use href="#chat"/></svg><svg class="a" style="left:1586px;top:309px;color:#d5d8dc;" width="14" height="14"><use href="#cal"/></svg><svg class="a" style="left:1606px;top:309.5px;color:#d5d8dc;" width="16" height="13"><use href="#ppl"/></svg><svg class="a" style="left:1628px;top:309px;color:#d5d8dc;" width="14" height="13"><use href="#bank"/></svg><svg class="a" style="left:1650px;top:308px;color:#d5d8dc;" width="12" height="16"><use href="#rcpt"/></svg><svg class="a" style="left:1690.5px;top:309.5px;color:#2f8cdb;" width="13" height="15"><use href="#tsic"/></svg><div class="a" style="left:1707.63px;top:307px;font-size:15px;line-height:15px;color:#2f8cdb;letter-spacing:0.292px;transform:scaleX(1.0281);transform-origin:0 0;will-change:transform;">9375</div><div class="a" style="left:1804px;top:304px;width:92px;height:24px;border:1px solid #2f8cdb;border-radius:5px;background:#fff"></div><div class="a" style="left:1870px;top:304px;width:1px;height:24px;background:#2f8cdb"></div><svg class="a" style="left:1808.5px;top:309px;color:#2f8cdb;" width="15" height="15"><use href="#pdf"/></svg><div class="a" style="left:1828.89px;top:307px;font-size:15px;line-height:15px;color:#2f8cdb;letter-spacing:0.292px;transform:scaleX(1.0279);transform-origin:0 0;will-change:transform;">3838</div><svg class="a" style="left:1876.5px;top:313px" width="13" height="8" viewBox="0 0 13 8"><path d="M1 1.2L6.5 6.7L12 1.2" fill="none" stroke="#2f8cdb" stroke-width="1.4" stroke-linecap="round" stroke-linejoin="round"/></svg><div class="a" style="left:15px;top:363px;width:1890px;height:1px;background:#dde0e4"></div><div class="a" style="left:32px;top:339px;width:16px;height:16px;border:1.5px solid #505359;border-radius:4px;background:#fff"></div><svg class="a" style="left:80px;top:336px" width="24" height="24" viewBox="0 0 24 24"><g clip-path="url(#avc)"><g filter="url(#avb)"><rect width="24" height="24" fill="#9da59f"/><circle cx="5" cy="10" r="3" fill="#6c716c"/><ellipse cx="13" cy="23" rx="11" ry="9" fill="#4b5054"/><circle cx="14" cy="9" r="3.6" fill="#b88e72"/><rect x="11" y="4.5" width="6" height="2" fill="#4a3b30"/></g></g></svg><div class="a" style="left:108.71px;top:338px;font-size:15px;line-height:15px;color:#3a8fd8;letter-spacing:0.445px;transform:scaleX(1.0593);transform-origin:0 0;will-change:transform;">Samuel Cee (4)</div><div class="a" style="left:536.69px;top:339px;font-size:15px;line-height:15px;color:#4d5157;letter-spacing:0.196px;transform:scaleX(1.0219);transform-origin:0 0;will-change:transform;">38.00</div><div class="a" style="left:681.14px;top:339px;font-size:15px;line-height:15px;color:#4d5157;letter-spacing:0.195px;transform:scaleX(1.0256);transform-origin:0 0;will-change:transform;">$<span style="display:inline-block;transform:scaleX(.85);margin:0 -1.70px">1</span>,644.23</div><div class="a" style="left:860.44px;top:339px;font-size:15px;line-height:15px;color:#4d5157;letter-spacing:0.195px;transform:scaleX(1.0240);transform-origin:0 0;will-change:transform;">$2<span style="display:inline-block;transform:scaleX(.85);margin:0 -1.70px">1</span>0.00</div><div class="a" style="left:1055.89px;top:339px;font-size:15px;line-height:15px;color:#4d5157;letter-spacing:0.196px;transform:scaleX(1.0218);transform-origin:0 0;will-change:transform;">$5.00</div><div class="a" style="left:1201.64px;top:339px;font-size:15px;line-height:15px;color:#4d5157;letter-spacing:0.195px;transform:scaleX(1.0256);transform-origin:0 0;will-change:transform;">$<span style="display:inline-block;transform:scaleX(.85);margin:0 -1.70px">1</span>,429.23</div><div class="a" style="left:1378.54px;top:339px;font-size:15px;line-height:15px;color:#4d5157;letter-spacing:0.195px;transform:scaleX(1.0240);transform-origin:0 0;will-change:transform;">$<span style="display:inline-block;transform:scaleX(.85);margin:0 -1.70px">1</span>80.87</div><div class="a" style="left:1464.14px;top:339px;font-size:15px;line-height:15px;color:#4d5157;letter-spacing:0.101px;transform:scaleX(1.0129);transform-origin:0 0;will-change:transform;">21 Apr 2024</div><svg class="a" style="left:1565px;top:341.5px;color:#d5d8dc;" width="14" height="13"><use href="#chat"/></svg><svg class="a" style="left:1586px;top:341px;color:#d5d8dc;" width="14" height="14"><use href="#cal"/></svg><svg class="a" style="left:1606px;top:341.5px;color:#d5d8dc;" width="16" height="13"><use href="#ppl"/></svg><svg class="a" style="left:1628px;top:341px;color:#d5d8dc;" width="14" height="13"><use href="#bank"/></svg><svg class="a" style="left:1650px;top:340px;color:#d5d8dc;" width="12" height="16"><use href="#rcpt"/></svg><svg class="a" style="left:1690.5px;top:341.5px;color:#2f8cdb;" width="13" height="15"><use href="#tsic"/></svg><div class="a" style="left:1707.63px;top:339px;font-size:15px;line-height:15px;color:#2f8cdb;letter-spacing:0.292px;transform:scaleX(1.0281);transform-origin:0 0;will-change:transform;">9366</div><div class="a" style="left:1804px;top:336px;width:92px;height:24px;border:1px solid #2f8cdb;border-radius:5px;background:#fff"></div><div class="a" style="left:1870px;top:336px;width:1px;height:24px;background:#2f8cdb"></div><svg class="a" style="left:1808.5px;top:341px;color:#2f8cdb;" width="15" height="15"><use href="#pdf"/></svg><div class="a" style="left:1828.89px;top:339px;font-size:15px;line-height:15px;color:#2f8cdb;letter-spacing:0.292px;transform:scaleX(1.0279);transform-origin:0 0;will-change:transform;">3845</div><svg class="a" style="left:1876.5px;top:345px" width="13" height="8" viewBox="0 0 13 8"><path d="M1 1.2L6.5 6.7L12 1.2" fill="none" stroke="#2f8cdb" stroke-width="1.4" stroke-linecap="round" stroke-linejoin="round"/></svg><div class="a" style="left:15px;top:395px;width:1890px;height:1px;background:#dde0e4"></div><div class="a" style="left:32px;top:371px;width:16px;height:16px;border:1.5px solid #505359;border-radius:4px;background:#fff"></div><svg class="a" style="left:80px;top:368px" width="24" height="24" viewBox="0 0 24 24"><g clip-path="url(#avc)"><g filter="url(#avb)"><rect width="24" height="24" fill="#4a4c4e"/><rect y="14" width="24" height="10" fill="#1b1b1b"/><ellipse cx="12" cy="13" rx="9" ry="6" fill="#111"/><ellipse cx="12" cy="12" rx="7" ry="4.5" fill="#c87c40"/><ellipse cx="12" cy="12" rx="4" ry="2.5" fill="#f1e0c8"/></g></g></svg><div class="a" style="left:109.23px;top:370px;font-size:15px;line-height:15px;color:#3a8fd8;letter-spacing:0.424px;transform:scaleX(1.0619);transform-origin:0 0;will-change:transform;">Tina Jackson (5)</div><div class="a" style="left:536.69px;top:371px;font-size:15px;line-height:15px;color:#4d5157;letter-spacing:0.196px;transform:scaleX(1.0219);transform-origin:0 0;will-change:transform;">38.00</div><div class="a" style="left:681.14px;top:371px;font-size:15px;line-height:15px;color:#4d5157;letter-spacing:0.195px;transform:scaleX(1.0256);transform-origin:0 0;will-change:transform;">$2,0<span style="display:inline-block;transform:scaleX(.85);margin:0 -1.70px">1</span>9.23</div><div class="a" style="left:857.04px;top:371px;font-size:15px;line-height:15px;color:#4d5157;letter-spacing:0.196px;transform:scaleX(1.0224);transform-origin:0 0;will-change:transform;">$330.00</div><div class="a" style="left:1055.89px;top:371px;font-size:15px;line-height:15px;color:#c5c8cd;letter-spacing:0.196px;transform:scaleX(1.0218);transform-origin:0 0;will-change:transform;">$0.00</div><div class="a" style="left:1201.64px;top:371px;font-size:15px;line-height:15px;color:#4d5157;letter-spacing:0.195px;transform:scaleX(1.0256);transform-origin:0 0;will-change:transform;">$<span style="display:inline-block;transform:scaleX(.85);margin:0 -1.70px">1</span>,689.23</div><div class="a" style="left:1378.54px;top:371px;font-size:15px;line-height:15px;color:#4d5157;letter-spacing:0.195px;transform:scaleX(1.0240);transform-origin:0 0;will-change:transform;">$222.<span style="display:inline-block;transform:scaleX(.85);margin:0 -1.70px">1</span>2</div><div class="a" style="left:1464.14px;top:371px;font-size:15px;line-height:15px;color:#4d5157;letter-spacing:0.101px;transform:scaleX(1.0129);transform-origin:0 0;will-change:transform;">21 Apr 2024</div><svg class="a" style="left:1565px;top:373.5px;color:#d5d8dc;" width="14" height="13"><use href="#chat"/></svg><svg class="a" style="left:1586px;top:373px;color:#d5d8dc;" width="14" height="14"><use href="#cal"/></svg><svg class="a" style="left:1606px;top:373.5px;color:#d5d8dc;" width="16" height="13"><use href="#ppl"/></svg><svg class="a" style="left:1628px;top:373px;color:#d5d8dc;" width="14" height="13"><use href="#bank"/></svg><svg class="a" style="left:1650px;top:372px;color:#d5d8dc;" width="12" height="16"><use href="#rcpt"/></svg><svg class="a" style="left:1690.5px;top:373.5px;color:#2f8cdb;" width="13" height="15"><use href="#tsic"/></svg><div class="a" style="left:1707.63px;top:371px;font-size:15px;line-height:15px;color:#2f8cdb;letter-spacing:0.291px;transform:scaleX(1.0315);transform-origin:0 0;will-change:transform;">937<span style="display:inline-block;transform:scaleX(.85);margin:0 -1.70px">1</span></div><div class="a" style="left:1804px;top:368px;width:92px;height:24px;border:1px solid #2f8cdb;border-radius:5px;background:#fff"></div><div class="a" style="left:1870px;top:368px;width:1px;height:24px;background:#2f8cdb"></div><svg class="a" style="left:1808.5px;top:373px;color:#2f8cdb;" width="15" height="15"><use href="#pdf"/></svg><div class="a" style="left:1828.89px;top:371px;font-size:15px;line-height:15px;color:#2f8cdb;letter-spacing:0.292px;transform:scaleX(1.0279);transform-origin:0 0;will-change:transform;">3847</div><svg class="a" style="left:1876.5px;top:377px" width="13" height="8" viewBox="0 0 13 8"><path d="M1 1.2L6.5 6.7L12 1.2" fill="none" stroke="#2f8cdb" stroke-width="1.4" stroke-linecap="round" stroke-linejoin="round"/></svg><div class="a" style="left:15px;top:427px;width:1890px;height:1px;background:#dde0e4"></div><div class="a" style="left:32px;top:403px;width:16px;height:16px;border:1.5px solid #505359;border-radius:4px;background:#fff"></div><svg class="a" style="left:80px;top:400px" width="24" height="24" viewBox="0 0 24 24"><g clip-path="url(#avc)"><g filter="url(#avb)"><rect width="24" height="24" fill="#1d2a40"/><rect x="3" y="6" width="3" height="14" fill="#4a5a78"/><rect x="9" y="4" width="2" height="16" fill="#c8b070"/><rect x="14" y="7" width="3" height="12" fill="#5b6d8c"/><rect x="19" y="5" width="2" height="14" fill="#d0c090"/><rect y="18" width="24" height="6" fill="#0f1520"/><circle cx="6" cy="19" r="1.5" fill="#eee"/></g></g></svg><div class="a" style="left:108.70px;top:402px;font-size:15px;line-height:15px;color:#3a8fd8;letter-spacing:0.463px;transform:scaleX(1.0654);transform-origin:0 0;will-change:transform;">Carlena Moananui (7)</div><div class="a" style="left:536.69px;top:403px;font-size:15px;line-height:15px;color:#4d5157;letter-spacing:0.196px;transform:scaleX(1.0219);transform-origin:0 0;will-change:transform;">38.00</div><div class="a" style="left:681.14px;top:403px;font-size:15px;line-height:15px;color:#4d5157;letter-spacing:0.195px;transform:scaleX(1.0256);transform-origin:0 0;will-change:transform;">$2,0<span style="display:inline-block;transform:scaleX(.85);margin:0 -1.70px">1</span>9.23</div><div class="a" style="left:857.04px;top:403px;font-size:15px;line-height:15px;color:#4d5157;letter-spacing:0.196px;transform:scaleX(1.0224);transform-origin:0 0;will-change:transform;">$330.00</div><div class="a" style="left:1055.89px;top:403px;font-size:15px;line-height:15px;color:#c5c8cd;letter-spacing:0.196px;transform:scaleX(1.0218);transform-origin:0 0;will-change:transform;">$0.00</div><div class="a" style="left:1201.64px;top:403px;font-size:15px;line-height:15px;color:#4d5157;letter-spacing:0.195px;transform:scaleX(1.0256);transform-origin:0 0;will-change:transform;">$<span style="display:inline-block;transform:scaleX(.85);margin:0 -1.70px">1</span>,689.23</div><div class="a" style="left:1378.54px;top:403px;font-size:15px;line-height:15px;color:#4d5157;letter-spacing:0.195px;transform:scaleX(1.0240);transform-origin:0 0;will-change:transform;">$222.<span style="display:inline-block;transform:scaleX(.85);margin:0 -1.70px">1</span>2</div><div class="a" style="left:1464.14px;top:403px;font-size:15px;line-height:15px;color:#4d5157;letter-spacing:0.101px;transform:scaleX(1.0129);transform-origin:0 0;will-change:transform;">21 Apr 2024</div><svg class="a" style="left:1565px;top:405.5px;color:#d5d8dc;" width="14" height="13"><use href="#chat"/></svg><svg class="a" style="left:1586px;top:405px;color:#d5d8dc;" width="14" height="14"><use href="#cal"/></svg><svg class="a" style="left:1606px;top:405.5px;color:#d5d8dc;" width="16" height="13"><use href="#ppl"/></svg><svg class="a" style="left:1628px;top:405px;color:#d5d8dc;" width="14" height="13"><use href="#bank"/></svg><svg class="a" style="left:1650px;top:404px;color:#d5d8dc;" width="12" height="16"><use href="#rcpt"/></svg><svg class="a" style="left:1690.5px;top:405.5px;color:#2f8cdb;" width="13" height="15"><use href="#tsic"/></svg><div class="a" style="left:1707.63px;top:403px;font-size:15px;line-height:15px;color:#2f8cdb;letter-spacing:0.292px;transform:scaleX(1.0281);transform-origin:0 0;will-change:transform;">9370</div><div class="a" style="left:1804px;top:400px;width:92px;height:24px;border:1px solid #2f8cdb;border-radius:5px;background:#fff"></div><div class="a" style="left:1870px;top:400px;width:1px;height:24px;background:#2f8cdb"></div><svg class="a" style="left:1808.5px;top:405px;color:#2f8cdb;" width="15" height="15"><use href="#pdf"/></svg><div class="a" style="left:1828.89px;top:403px;font-size:15px;line-height:15px;color:#2f8cdb;letter-spacing:0.292px;transform:scaleX(1.0279);transform-origin:0 0;will-change:transform;">3849</div><svg class="a" style="left:1876.5px;top:409px" width="13" height="8" viewBox="0 0 13 8"><path d="M1 1.2L6.5 6.7L12 1.2" fill="none" stroke="#2f8cdb" stroke-width="1.4" stroke-linecap="round" stroke-linejoin="round"/></svg><div class="a" style="left:15px;top:459px;width:1890px;height:1px;background:#dde0e4"></div><div class="a" style="left:32px;top:435px;width:16px;height:16px;border:1.5px solid #505359;border-radius:4px;background:#fff"></div><svg class="a" style="left:80px;top:432px" width="24" height="24" viewBox="0 0 24 24"><g clip-path="url(#avc)"><g filter="url(#avb)"><rect width="24" height="24" fill="#d5cfc0"/><ellipse cx="12" cy="24" rx="9" ry="8" fill="#4e9c8c"/><circle cx="12" cy="10" r="4" fill="#c59a80"/><ellipse cx="12" cy="7" rx="4.5" ry="3" fill="#2f2520"/><rect x="10" y="16" width="4" height="3" fill="#6a4a3a"/></g></g></svg><div class="a" style="left:108.71px;top:434px;font-size:15px;line-height:15px;color:#3a8fd8;letter-spacing:0.406px;transform:scaleX(1.0594);transform-origin:0 0;will-change:transform;">Cheyne Butler (8)</div><div class="a" style="left:536.69px;top:435px;font-size:15px;line-height:15px;color:#4d5157;letter-spacing:0.196px;transform:scaleX(1.0219);transform-origin:0 0;will-change:transform;">38.00</div><div class="a" style="left:681.14px;top:435px;font-size:15px;line-height:15px;color:#4d5157;letter-spacing:0.195px;transform:scaleX(1.0256);transform-origin:0 0;will-change:transform;">$<span style="display:inline-block;transform:scaleX(.85);margin:0 -1.70px">1</span>,538.46</div><div class="a" style="left:860.44px;top:435px;font-size:15px;line-height:15px;color:#4d5157;letter-spacing:0.195px;transform:scaleX(1.0240);transform-origin:0 0;will-change:transform;">$<span style="display:inline-block;transform:scaleX(.85);margin:0 -1.70px">1</span>88.00</div><div class="a" style="left:1055.89px;top:435px;font-size:15px;line-height:15px;color:#c5c8cd;letter-spacing:0.196px;transform:scaleX(1.0218);transform-origin:0 0;will-change:transform;">$0.00</div><div class="a" style="left:1201.64px;top:435px;font-size:15px;line-height:15px;color:#4d5157;letter-spacing:0.195px;transform:scaleX(1.0256);transform-origin:0 0;will-change:transform;">$<span style="display:inline-block;transform:scaleX(.85);margin:0 -1.70px">1</span>,350.46</div><div class="a" style="left:1378.54px;top:435px;font-size:15px;line-height:15px;color:#4d5157;letter-spacing:0.195px;transform:scaleX(1.0240);transform-origin:0 0;will-change:transform;">$<span style="display:inline-block;transform:scaleX(.85);margin:0 -1.70px">1</span>69.23</div><div class="a" style="left:1464.14px;top:435px;font-size:15px;line-height:15px;color:#4d5157;letter-spacing:0.101px;transform:scaleX(1.0129);transform-origin:0 0;will-change:transform;">21 Apr 2024</div><svg class="a" style="left:1565px;top:437.5px;color:#d5d8dc;" width="14" height="13"><use href="#chat"/></svg><svg class="a" style="left:1586px;top:437px;color:#d5d8dc;" width="14" height="14"><use href="#cal"/></svg><svg class="a" style="left:1606px;top:437.5px;color:#d5d8dc;" width="16" height="13"><use href="#ppl"/></svg><svg class="a" style="left:1628px;top:437px;color:#d5d8dc;" width="14" height="13"><use href="#bank"/></svg><svg class="a" style="left:1650px;top:436px;color:#d5d8dc;" width="12" height="16"><use href="#rcpt"/></svg><svg class="a" style="left:1690.5px;top:437.5px;color:#2f8cdb;" width="13" height="15"><use href="#tsic"/></svg><div class="a" style="left:1707.63px;top:435px;font-size:15px;line-height:15px;color:#2f8cdb;letter-spacing:0.292px;transform:scaleX(1.0281);transform-origin:0 0;will-change:transform;">9368</div><div class="a" style="left:1804px;top:432px;width:92px;height:24px;border:1px solid #2f8cdb;border-radius:5px;background:#fff"></div><div class="a" style="left:1870px;top:432px;width:1px;height:24px;background:#2f8cdb"></div><svg class="a" style="left:1808.5px;top:437px;color:#2f8cdb;" width="15" height="15"><use href="#pdf"/></svg><div class="a" style="left:1828.89px;top:435px;font-size:15px;line-height:15px;color:#2f8cdb;letter-spacing:0.292px;transform:scaleX(1.0279);transform-origin:0 0;will-change:transform;">3848</div><svg class="a" style="left:1876.5px;top:441px" width="13" height="8" viewBox="0 0 13 8"><path d="M1 1.2L6.5 6.7L12 1.2" fill="none" stroke="#2f8cdb" stroke-width="1.4" stroke-linecap="round" stroke-linejoin="round"/></svg><div class="a" style="left:15px;top:491px;width:1890px;height:1px;background:#dde0e4"></div><div class="a" style="left:32px;top:467px;width:16px;height:16px;border:1.5px solid #505359;border-radius:4px;background:#fff"></div><svg class="a" style="left:80px;top:464px" width="24" height="24" viewBox="0 0 24 24"><g clip-path="url(#avc)"><g filter="url(#avb)"><rect width="24" height="24" fill="#e4e6e8"/><rect x="2" y="0" width="5" height="24" fill="#f8f8f8"/><path d="M8 24 L12 14 L24 12 V24z" fill="#1f2326"/><path d="M2 20 L8 14 L10 24 H2z" fill="#2a3f6c"/><circle cx="12" cy="8" r="3.8" fill="#caa88f"/><rect x="9" y="6.5" width="6" height="1.6" fill="#333"/></g></g></svg><div class="a" style="left:109.50px;top:466px;font-size:15px;line-height:15px;color:#3a8fd8;letter-spacing:0.411px;transform:scaleX(1.0698);transform-origin:0 0;will-change:transform;">Alistair Tan (9)</div><div class="a" style="left:536.69px;top:467px;font-size:15px;line-height:15px;color:#4d5157;letter-spacing:0.196px;transform:scaleX(1.0219);transform-origin:0 0;will-change:transform;">38.00</div><div class="a" style="left:681.14px;top:467px;font-size:15px;line-height:15px;color:#4d5157;letter-spacing:0.195px;transform:scaleX(1.0256);transform-origin:0 0;will-change:transform;">$2,884.6<span style="display:inline-block;transform:scaleX(.85);margin:0 -1.70px">1</span></div><div class="a" style="left:857.04px;top:467px;font-size:15px;line-height:15px;color:#4d5157;letter-spacing:0.196px;transform:scaleX(1.0224);transform-origin:0 0;will-change:transform;">$630.00</div><div class="a" style="left:1055.89px;top:467px;font-size:15px;line-height:15px;color:#4d5157;letter-spacing:0.196px;transform:scaleX(1.0218);transform-origin:0 0;will-change:transform;">$5.00</div><div class="a" style="left:1201.64px;top:467px;font-size:15px;line-height:15px;color:#4d5157;letter-spacing:0.195px;transform:scaleX(1.0256);transform-origin:0 0;will-change:transform;">$2,249.6<span style="display:inline-block;transform:scaleX(.85);margin:0 -1.70px">1</span></div><div class="a" style="left:1381.94px;top:467px;font-size:15px;line-height:15px;color:#4d5157;letter-spacing:0.195px;transform:scaleX(1.0257);transform-origin:0 0;will-change:transform;">$3<span style="display:inline-block;transform:scaleX(.85);margin:0 -1.70px">1</span>7.3<span style="display:inline-block;transform:scaleX(.85);margin:0 -1.70px">1</span></div><div class="a" style="left:1464.14px;top:467px;font-size:15px;line-height:15px;color:#4d5157;letter-spacing:0.101px;transform:scaleX(1.0129);transform-origin:0 0;will-change:transform;">21 Apr 2024</div><svg class="a" style="left:1565px;top:469.5px;color:#d5d8dc;" width="14" height="13"><use href="#chat"/></svg><svg class="a" style="left:1586px;top:469px;color:#d5d8dc;" width="14" height="14"><use href="#cal"/></svg><svg class="a" style="left:1606px;top:469.5px;color:#d5d8dc;" width="16" height="13"><use href="#ppl"/></svg><svg class="a" style="left:1628px;top:469px;color:#d5d8dc;" width="14" height="13"><use href="#bank"/></svg><svg class="a" style="left:1650px;top:468px;color:#d5d8dc;" width="12" height="16"><use href="#rcpt"/></svg><svg class="a" style="left:1690.5px;top:469.5px;color:#2f8cdb;" width="13" height="15"><use href="#tsic"/></svg><div class="a" style="left:1707.63px;top:467px;font-size:15px;line-height:15px;color:#2f8cdb;letter-spacing:0.292px;transform:scaleX(1.0281);transform-origin:0 0;will-change:transform;">9376</div><div class="a" style="left:1804px;top:464px;width:92px;height:24px;border:1px solid #2f8cdb;border-radius:5px;background:#fff"></div><div class="a" style="left:1870px;top:464px;width:1px;height:24px;background:#2f8cdb"></div><svg class="a" style="left:1808.5px;top:469px;color:#2f8cdb;" width="15" height="15"><use href="#pdf"/></svg><div class="a" style="left:1828.89px;top:467px;font-size:15px;line-height:15px;color:#2f8cdb;letter-spacing:0.292px;transform:scaleX(1.0279);transform-origin:0 0;will-change:transform;">3839</div><svg class="a" style="left:1876.5px;top:473px" width="13" height="8" viewBox="0 0 13 8"><path d="M1 1.2L6.5 6.7L12 1.2" fill="none" stroke="#2f8cdb" stroke-width="1.4" stroke-linecap="round" stroke-linejoin="round"/></svg><div class="a" style="left:15px;top:523px;width:1890px;height:1px;background:#dde0e4"></div><div class="a" style="left:32px;top:499px;width:16px;height:16px;border:1.5px solid #505359;border-radius:4px;background:#fff"></div><svg class="a" style="left:80px;top:496px" width="24" height="24" viewBox="0 0 24 24"><g clip-path="url(#avc)"><g filter="url(#avb)"><rect width="24" height="24" fill="#18161a"/><circle cx="13" cy="7" r="3.5" fill="#b4826e"/><path d="M4 24 L9 14 L18 13 L22 24z" fill="#c94454"/><rect x="9" y="17" width="7" height="4" fill="#e8a0a8"/></g></g></svg><div class="a" style="left:108.71px;top:498px;font-size:15px;line-height:15px;color:#3a8fd8;letter-spacing:0.367px;transform:scaleX(1.0528);transform-origin:0 0;will-change:transform;">Cassie Wheeler (<span style="display:inline-block;transform:scaleX(.85);margin:0 -1.70px">1</span>0)</div><div class="a" style="left:536.69px;top:499px;font-size:15px;line-height:15px;color:#4d5157;letter-spacing:0.196px;transform:scaleX(1.0219);transform-origin:0 0;will-change:transform;">38.00</div><div class="a" style="left:681.14px;top:499px;font-size:15px;line-height:15px;color:#4d5157;letter-spacing:0.195px;transform:scaleX(1.0256);transform-origin:0 0;will-change:transform;">$2,884.6<span style="display:inline-block;transform:scaleX(.85);margin:0 -1.70px">1</span></div><div class="a" style="left:857.04px;top:499px;font-size:15px;line-height:15px;color:#4d5157;letter-spacing:0.196px;transform:scaleX(1.0224);transform-origin:0 0;will-change:transform;">$630.00</div><div class="a" style="left:1055.89px;top:499px;font-size:15px;line-height:15px;color:#4d5157;letter-spacing:0.196px;transform:scaleX(1.0218);transform-origin:0 0;will-change:transform;">$5.00</div><div class="a" style="left:1201.64px;top:499px;font-size:15px;line-height:15px;color:#4d5157;letter-spacing:0.195px;transform:scaleX(1.0256);transform-origin:0 0;will-change:transform;">$2,249.6<span style="display:inline-block;transform:scaleX(.85);margin:0 -1.70px">1</span></div><div class="a" style="left:1381.94px;top:499px;font-size:15px;line-height:15px;color:#4d5157;letter-spacing:0.195px;transform:scaleX(1.0257);transform-origin:0 0;will-change:transform;">$3<span style="display:inline-block;transform:scaleX(.85);margin:0 -1.70px">1</span>7.3<span style="display:inline-block;transform:scaleX(.85);margin:0 -1.70px">1</span></div><div class="a" style="left:1464.14px;top:499px;font-size:15px;line-height:15px;color:#4d5157;letter-spacing:0.101px;transform:scaleX(1.0129);transform-origin:0 0;will-change:transform;">21 Apr 2024</div><svg class="a" style="left:1565px;top:501.5px;color:#d5d8dc;" width="14" height="13"><use href="#chat"/></svg><svg class="a" style="left:1586px;top:501px;color:#d5d8dc;" width="14" height="14"><use href="#cal"/></svg><svg class="a" style="left:1606px;top:501.5px;color:#d5d8dc;" width="16" height="13"><use href="#ppl"/></svg><svg class="a" style="left:1628px;top:501px;color:#d5d8dc;" width="14" height="13"><use href="#bank"/></svg><svg class="a" style="left:1650px;top:500px;color:#d5d8dc;" width="12" height="16"><use href="#rcpt"/></svg><svg class="a" style="left:1690.5px;top:501.5px;color:#2f8cdb;" width="13" height="15"><use href="#tsic"/></svg><div class="a" style="left:1707.63px;top:499px;font-size:15px;line-height:15px;color:#2f8cdb;letter-spacing:0.292px;transform:scaleX(1.0281);transform-origin:0 0;will-change:transform;">9377</div><div class="a" style="left:1804px;top:496px;width:92px;height:24px;border:1px solid #2f8cdb;border-radius:5px;background:#fff"></div><div class="a" style="left:1870px;top:496px;width:1px;height:24px;background:#2f8cdb"></div><svg class="a" style="left:1808.5px;top:501px;color:#2f8cdb;" width="15" height="15"><use href="#pdf"/></svg><div class="a" style="left:1828.89px;top:499px;font-size:15px;line-height:15px;color:#2f8cdb;letter-spacing:0.292px;transform:scaleX(1.0279);transform-origin:0 0;will-change:transform;">3853</div><svg class="a" style="left:1876.5px;top:505px" width="13" height="8" viewBox="0 0 13 8"><path d="M1 1.2L6.5 6.7L12 1.2" fill="none" stroke="#2f8cdb" stroke-width="1.4" stroke-linecap="round" stroke-linejoin="round"/></svg><div class="a" style="left:15px;top:555px;width:1890px;height:1px;background:#dde0e4"></div><div class="a" style="left:32px;top:531px;width:16px;height:16px;border:1.5px solid #505359;border-radius:4px;background:#fff"></div><svg class="a" style="left:80px;top:528px" width="24" height="24" viewBox="0 0 24 24"><g clip-path="url(#avc)"><g filter="url(#avb)"><rect width="24" height="24" fill="#6c7276"/><ellipse cx="12" cy="24" rx="13" ry="9" fill="#3d8fd4"/><circle cx="12" cy="10" r="5" fill="#a6795c"/><rect x="7" y="5" width="10" height="2.5" fill="#2a2220"/></g></g></svg><div class="a" style="left:108.71px;top:530px;font-size:15px;line-height:15px;color:#3a8fd8;letter-spacing:0.410px;transform:scaleX(1.0583);transform-origin:0 0;will-change:transform;">Qun Gao (<span style="display:inline-block;transform:scaleX(.85);margin:0 -1.70px">1</span><span style="display:inline-block;transform:scaleX(.85);margin:0 -1.70px">1</span>)</div><div class="a" style="left:536.69px;top:531px;font-size:15px;line-height:15px;color:#4d5157;letter-spacing:0.196px;transform:scaleX(1.0219);transform-origin:0 0;will-change:transform;">38.00</div><div class="a" style="left:681.14px;top:531px;font-size:15px;line-height:15px;color:#4d5157;letter-spacing:0.195px;transform:scaleX(1.0256);transform-origin:0 0;will-change:transform;">$3,<span style="display:inline-block;transform:scaleX(.85);margin:0 -1.70px">1</span>73.08</div><div class="a" style="left:857.04px;top:531px;font-size:15px;line-height:15px;color:#4d5157;letter-spacing:0.196px;transform:scaleX(1.0224);transform-origin:0 0;will-change:transform;">$730.00</div><div class="a" style="left:1055.89px;top:531px;font-size:15px;line-height:15px;color:#c5c8cd;letter-spacing:0.196px;transform:scaleX(1.0218);transform-origin:0 0;will-change:transform;">$0.00</div><div class="a" style="left:1198.24px;top:531px;font-size:15px;line-height:15px;color:#4d5157;letter-spacing:0.195px;transform:scaleX(1.0242);transform-origin:0 0;will-change:transform;">$2,443.08</div><div class="a" style="left:1374.89px;top:531px;font-size:15px;line-height:15px;color:#4d5157;letter-spacing:0.196px;transform:scaleX(1.0223);transform-origin:0 0;will-change:transform;">$349.04</div><div class="a" style="left:1464.14px;top:531px;font-size:15px;line-height:15px;color:#4d5157;letter-spacing:0.101px;transform:scaleX(1.0129);transform-origin:0 0;will-change:transform;">21 Apr 2024</div><svg class="a" style="left:1565px;top:533.5px;color:#d5d8dc;" width="14" height="13"><use href="#chat"/></svg><svg class="a" style="left:1586px;top:533px;color:#d5d8dc;" width="14" height="14"><use href="#cal"/></svg><svg class="a" style="left:1606px;top:533.5px;color:#d5d8dc;" width="16" height="13"><use href="#ppl"/></svg><svg class="a" style="left:1628px;top:533px;color:#d5d8dc;" width="14" height="13"><use href="#bank"/></svg><svg class="a" style="left:1650px;top:532px;color:#d5d8dc;" width="12" height="16"><use href="#rcpt"/></svg><svg class="a" style="left:1690.5px;top:533.5px;color:#2f8cdb;" width="13" height="15"><use href="#tsic"/></svg><div class="a" style="left:1707.63px;top:531px;font-size:15px;line-height:15px;color:#2f8cdb;letter-spacing:0.291px;transform:scaleX(1.0315);transform-origin:0 0;will-change:transform;">936<span style="display:inline-block;transform:scaleX(.85);margin:0 -1.70px">1</span></div><div class="a" style="left:1804px;top:528px;width:92px;height:24px;border:1px solid #2f8cdb;border-radius:5px;background:#fff"></div><div class="a" style="left:1870px;top:528px;width:1px;height:24px;background:#2f8cdb"></div><svg class="a" style="left:1808.5px;top:533px;color:#2f8cdb;" width="15" height="15"><use href="#pdf"/></svg><div class="a" style="left:1828.89px;top:531px;font-size:15px;line-height:15px;color:#2f8cdb;letter-spacing:0.292px;transform:scaleX(1.0279);transform-origin:0 0;will-change:transform;">3840</div><svg class="a" style="left:1876.5px;top:537px" width="13" height="8" viewBox="0 0 13 8"><path d="M1 1.2L6.5 6.7L12 1.2" fill="none" stroke="#2f8cdb" stroke-width="1.4" stroke-linecap="round" stroke-linejoin="round"/></svg><div class="a" style="left:15px;top:587px;width:1890px;height:1px;background:#dde0e4"></div><div class="a" style="left:32px;top:563px;width:16px;height:16px;border:1.5px solid #505359;border-radius:4px;background:#fff"></div><svg class="a" style="left:80px;top:560px" width="24" height="24" viewBox="0 0 24 24"><g clip-path="url(#avc)"><g filter="url(#avb)"><rect width="24" height="24" fill="#f1f1f1"/><path d="M7 24 L8 12 L10 9 L14 9 L16 12 L17 24z" fill="#141414"/><circle cx="12" cy="6" r="2.8" fill="#1a1a1a"/></g></g></svg><div class="a" style="left:108.17px;top:562px;font-size:15px;line-height:15px;color:#3a8fd8;letter-spacing:0.425px;transform:scaleX(1.0615);transform-origin:0 0;will-change:transform;">Megan Mansfield (<span style="display:inline-block;transform:scaleX(.85);margin:0 -1.70px">1</span>2)</div><div class="a" style="left:536.69px;top:563px;font-size:15px;line-height:15px;color:#4d5157;letter-spacing:0.196px;transform:scaleX(1.0219);transform-origin:0 0;will-change:transform;">38.00</div><div class="a" style="left:681.14px;top:563px;font-size:15px;line-height:15px;color:#4d5157;letter-spacing:0.195px;transform:scaleX(1.0256);transform-origin:0 0;will-change:transform;">$<span style="display:inline-block;transform:scaleX(.85);margin:0 -1.70px">1</span>,538.46</div><div class="a" style="left:857.04px;top:563px;font-size:15px;line-height:15px;color:#4d5157;letter-spacing:0.196px;transform:scaleX(1.0224);transform-origin:0 0;will-change:transform;">$238.00</div><div class="a" style="left:1055.89px;top:563px;font-size:15px;line-height:15px;color:#c5c8cd;letter-spacing:0.196px;transform:scaleX(1.0218);transform-origin:0 0;will-change:transform;">$0.00</div><div class="a" style="left:1201.64px;top:563px;font-size:15px;line-height:15px;color:#4d5157;letter-spacing:0.195px;transform:scaleX(1.0256);transform-origin:0 0;will-change:transform;">$<span style="display:inline-block;transform:scaleX(.85);margin:0 -1.70px">1</span>,300.46</div><div class="a" style="left:1378.54px;top:563px;font-size:15px;line-height:15px;color:#4d5157;letter-spacing:0.195px;transform:scaleX(1.0240);transform-origin:0 0;will-change:transform;">$<span style="display:inline-block;transform:scaleX(.85);margin:0 -1.70px">1</span>69.23</div><div class="a" style="left:1464.14px;top:563px;font-size:15px;line-height:15px;color:#4d5157;letter-spacing:0.101px;transform:scaleX(1.0129);transform-origin:0 0;will-change:transform;">21 Apr 2024</div><svg class="a" style="left:1565px;top:565.5px;color:#d5d8dc;" width="14" height="13"><use href="#chat"/></svg><svg class="a" style="left:1586px;top:565px;color:#d5d8dc;" width="14" height="14"><use href="#cal"/></svg><svg class="a" style="left:1606px;top:565.5px;color:#d5d8dc;" width="16" height="13"><use href="#ppl"/></svg><svg class="a" style="left:1628px;top:565px;color:#d5d8dc;" width="14" height="13"><use href="#bank"/></svg><svg class="a" style="left:1650px;top:564px;color:#d5d8dc;" width="12" height="16"><use href="#rcpt"/></svg><svg class="a" style="left:1690.5px;top:565.5px;color:#2f8cdb;" width="13" height="15"><use href="#tsic"/></svg><div class="a" style="left:1707.63px;top:563px;font-size:15px;line-height:15px;color:#2f8cdb;letter-spacing:0.292px;transform:scaleX(1.0281);transform-origin:0 0;will-change:transform;">9367</div><div class="a" style="left:1804px;top:560px;width:92px;height:24px;border:1px solid #2f8cdb;border-radius:5px;background:#fff"></div><div class="a" style="left:1870px;top:560px;width:1px;height:24px;background:#2f8cdb"></div><svg class="a" style="left:1808.5px;top:565px;color:#2f8cdb;" width="15" height="15"><use href="#pdf"/></svg><div class="a" style="left:1828.89px;top:563px;font-size:15px;line-height:15px;color:#2f8cdb;letter-spacing:0.292px;transform:scaleX(1.0279);transform-origin:0 0;will-change:transform;">3852</div><svg class="a" style="left:1876.5px;top:569px" width="13" height="8" viewBox="0 0 13 8"><path d="M1 1.2L6.5 6.7L12 1.2" fill="none" stroke="#2f8cdb" stroke-width="1.4" stroke-linecap="round" stroke-linejoin="round"/></svg><div class="a" style="left:15px;top:619px;width:1890px;height:1px;background:#dde0e4"></div><div class="a" style="left:32px;top:595px;width:16px;height:16px;border:1.5px solid #505359;border-radius:4px;background:#fff"></div><svg class="a" style="left:80px;top:592px" width="24" height="24" viewBox="0 0 24 24"><g clip-path="url(#avc)"><g filter="url(#avb)"><rect width="24" height="24" fill="#8f9498"/><rect x="3" y="0" width="6" height="12" fill="#d8dadc"/><rect x="12" y="0" width="6" height="12" fill="#c8cbce"/><rect y="13" width="24" height="11" fill="#6a6e72"/><ellipse cx="13" cy="19" rx="6" ry="5" fill="#f2f2f2"/><circle cx="13" cy="11" r="2.8" fill="#a8785c"/></g></g></svg><div class="a" style="left:108.71px;top:594px;font-size:15px;line-height:15px;color:#3a8fd8;letter-spacing:0.375px;transform:scaleX(1.0566);transform-origin:0 0;will-change:transform;">Carly Lygon (<span style="display:inline-block;transform:scaleX(.85);margin:0 -1.70px">1</span>3)</div><div class="a" style="left:536.69px;top:595px;font-size:15px;line-height:15px;color:#4d5157;letter-spacing:0.196px;transform:scaleX(1.0219);transform-origin:0 0;will-change:transform;">38.00</div><div class="a" style="left:681.14px;top:595px;font-size:15px;line-height:15px;color:#4d5157;letter-spacing:0.195px;transform:scaleX(1.0256);transform-origin:0 0;will-change:transform;">$<span style="display:inline-block;transform:scaleX(.85);margin:0 -1.70px">1</span>,735.58</div><div class="a" style="left:857.04px;top:595px;font-size:15px;line-height:15px;color:#4d5157;letter-spacing:0.196px;transform:scaleX(1.0224);transform-origin:0 0;will-change:transform;">$232.00</div><div class="a" style="left:1055.89px;top:595px;font-size:15px;line-height:15px;color:#4d5157;letter-spacing:0.196px;transform:scaleX(1.0218);transform-origin:0 0;will-change:transform;">$5.00</div><div class="a" style="left:1201.64px;top:595px;font-size:15px;line-height:15px;color:#4d5157;letter-spacing:0.195px;transform:scaleX(1.0256);transform-origin:0 0;will-change:transform;">$<span style="display:inline-block;transform:scaleX(.85);margin:0 -1.70px">1</span>,498.58</div><div class="a" style="left:1381.94px;top:595px;font-size:15px;line-height:15px;color:#4d5157;letter-spacing:0.195px;transform:scaleX(1.0257);transform-origin:0 0;will-change:transform;">$<span style="display:inline-block;transform:scaleX(.85);margin:0 -1.70px">1</span>90.9<span style="display:inline-block;transform:scaleX(.85);margin:0 -1.70px">1</span></div><div class="a" style="left:1464.14px;top:595px;font-size:15px;line-height:15px;color:#4d5157;letter-spacing:0.101px;transform:scaleX(1.0129);transform-origin:0 0;will-change:transform;">21 Apr 2024</div><svg class="a" style="left:1565px;top:597.5px;color:#d5d8dc;" width="14" height="13"><use href="#chat"/></svg><svg class="a" style="left:1586px;top:597px;color:#d5d8dc;" width="14" height="14"><use href="#cal"/></svg><svg class="a" style="left:1606px;top:597.5px;color:#d5d8dc;" width="16" height="13"><use href="#ppl"/></svg><svg class="a" style="left:1628px;top:597px;color:#d5d8dc;" width="14" height="13"><use href="#bank"/></svg><svg class="a" style="left:1650px;top:596px;color:#d5d8dc;" width="12" height="16"><use href="#rcpt"/></svg><svg class="a" style="left:1690.5px;top:597.5px;color:#2f8cdb;" width="13" height="15"><use href="#tsic"/></svg><div class="a" style="left:1707.63px;top:595px;font-size:15px;line-height:15px;color:#2f8cdb;letter-spacing:0.292px;transform:scaleX(1.0281);transform-origin:0 0;will-change:transform;">9378</div><div class="a" style="left:1804px;top:592px;width:92px;height:24px;border:1px solid #2f8cdb;border-radius:5px;background:#fff"></div><div class="a" style="left:1870px;top:592px;width:1px;height:24px;background:#2f8cdb"></div><svg class="a" style="left:1808.5px;top:597px;color:#2f8cdb;" width="15" height="15"><use href="#pdf"/></svg><div class="a" style="left:1828.89px;top:595px;font-size:15px;line-height:15px;color:#2f8cdb;letter-spacing:0.292px;transform:scaleX(1.0279);transform-origin:0 0;will-change:transform;">3837</div><svg class="a" style="left:1876.5px;top:601px" width="13" height="8" viewBox="0 0 13 8"><path d="M1 1.2L6.5 6.7L12 1.2" fill="none" stroke="#2f8cdb" stroke-width="1.4" stroke-linecap="round" stroke-linejoin="round"/></svg><div class="a" style="left:15px;top:651px;width:1890px;height:1px;background:#dde0e4"></div><div class="a" style="left:32px;top:627px;width:16px;height:16px;border:1.5px solid #505359;border-radius:4px;background:#fff"></div><svg class="a" style="left:80px;top:624px" width="24" height="24" viewBox="0 0 24 24"><g clip-path="url(#avc)"><g filter="url(#avb)"><rect width="24" height="24" fill="#e2e6e6"/><rect y="14" width="24" height="10" fill="#868a7e"/><ellipse cx="9" cy="17" rx="5" ry="6" fill="#3e4448"/><circle cx="9" cy="9" r="2.6" fill="#9a8070"/></g></g></svg><div class="a" style="left:108.71px;top:626px;font-size:15px;line-height:15px;color:#3a8fd8;letter-spacing:0.354px;transform:scaleX(1.0471);transform-origin:0 0;will-change:transform;">Sam Banks (<span style="display:inline-block;transform:scaleX(.85);margin:0 -1.70px">1</span>5)</div><div class="a" style="left:536.69px;top:627px;font-size:15px;line-height:15px;color:#4d5157;letter-spacing:0.196px;transform:scaleX(1.0219);transform-origin:0 0;will-change:transform;">38.00</div><div class="a" style="left:677.74px;top:627px;font-size:15px;line-height:15px;color:#4d5157;letter-spacing:0.195px;transform:scaleX(1.0242);transform-origin:0 0;will-change:transform;">$2,788.46</div><div class="a" style="left:857.04px;top:627px;font-size:15px;line-height:15px;color:#4d5157;letter-spacing:0.196px;transform:scaleX(1.0224);transform-origin:0 0;will-change:transform;">$598.00</div><div class="a" style="left:1055.89px;top:627px;font-size:15px;line-height:15px;color:#c5c8cd;letter-spacing:0.196px;transform:scaleX(1.0218);transform-origin:0 0;will-change:transform;">$0.00</div><div class="a" style="left:1201.64px;top:627px;font-size:15px;line-height:15px;color:#4d5157;letter-spacing:0.195px;transform:scaleX(1.0256);transform-origin:0 0;will-change:transform;">$2,<span style="display:inline-block;transform:scaleX(.85);margin:0 -1.70px">1</span>90.46</div><div class="a" style="left:1375.14px;top:627px;font-size:15px;line-height:15px;color:#4d5157;letter-spacing:0.196px;transform:scaleX(1.0224);transform-origin:0 0;will-change:transform;">$306.73</div><div class="a" style="left:1464.14px;top:627px;font-size:15px;line-height:15px;color:#4d5157;letter-spacing:0.101px;transform:scaleX(1.0129);transform-origin:0 0;will-change:transform;">21 Apr 2024</div><svg class="a" style="left:1565px;top:629.5px;color:#d5d8dc;" width="14" height="13"><use href="#chat"/></svg><svg class="a" style="left:1586px;top:629px;color:#d5d8dc;" width="14" height="14"><use href="#cal"/></svg><svg class="a" style="left:1606px;top:629.5px;color:#d5d8dc;" width="16" height="13"><use href="#ppl"/></svg><svg class="a" style="left:1628px;top:629px;color:#d5d8dc;" width="14" height="13"><use href="#bank"/></svg><svg class="a" style="left:1650px;top:628px;color:#d5d8dc;" width="12" height="16"><use href="#rcpt"/></svg><svg class="a" style="left:1690.5px;top:629.5px;color:#2f8cdb;" width="13" height="15"><use href="#tsic"/></svg><div class="a" style="left:1707.63px;top:627px;font-size:15px;line-height:15px;color:#2f8cdb;letter-spacing:0.292px;transform:scaleX(1.0281);transform-origin:0 0;will-change:transform;">9362</div><div class="a" style="left:1804px;top:624px;width:92px;height:24px;border:1px solid #2f8cdb;border-radius:5px;background:#fff"></div><div class="a" style="left:1870px;top:624px;width:1px;height:24px;background:#2f8cdb"></div><svg class="a" style="left:1808.5px;top:629px;color:#2f8cdb;" width="15" height="15"><use href="#pdf"/></svg><div class="a" style="left:1828.89px;top:627px;font-size:15px;line-height:15px;color:#2f8cdb;letter-spacing:0.292px;transform:scaleX(1.0279);transform-origin:0 0;will-change:transform;">3843</div><svg class="a" style="left:1876.5px;top:633px" width="13" height="8" viewBox="0 0 13 8"><path d="M1 1.2L6.5 6.7L12 1.2" fill="none" stroke="#2f8cdb" stroke-width="1.4" stroke-linecap="round" stroke-linejoin="round"/></svg><div class="a" style="left:15px;top:683px;width:1890px;height:1px;background:#dde0e4"></div><div class="a" style="left:32px;top:659px;width:16px;height:16px;border:1.5px solid #505359;border-radius:4px;background:#fff"></div><svg class="a" style="left:80px;top:656px" width="24" height="24" viewBox="0 0 24 24"><g clip-path="url(#avc)"><g filter="url(#avb)"><rect width="24" height="24" fill="#7a6040"/><rect x="0" y="0" width="8" height="24" fill="#a08a50"/><rect x="16" y="0" width="8" height="14" fill="#e8e2d4"/><circle cx="12" cy="9" r="4" fill="#5a3a2a"/><rect x="11" y="13" width="6" height="6" fill="#e0e0e0"/></g></g></svg><div class="a" style="left:108.71px;top:658px;font-size:15px;line-height:15px;color:#3a8fd8;letter-spacing:0.372px;transform:scaleX(1.0556);transform-origin:0 0;will-change:transform;">Cassie Charles (<span style="display:inline-block;transform:scaleX(.85);margin:0 -1.70px">1</span>6)</div><div class="a" style="left:536.69px;top:659px;font-size:15px;line-height:15px;color:#4d5157;letter-spacing:0.196px;transform:scaleX(1.0219);transform-origin:0 0;will-change:transform;">38.00</div><div class="a" style="left:681.14px;top:659px;font-size:15px;line-height:15px;color:#4d5157;letter-spacing:0.195px;transform:scaleX(1.0256);transform-origin:0 0;will-change:transform;">$<span style="display:inline-block;transform:scaleX(.85);margin:0 -1.70px">1</span>,735.58</div><div class="a" style="left:857.04px;top:659px;font-size:15px;line-height:15px;color:#4d5157;letter-spacing:0.196px;transform:scaleX(1.0224);transform-origin:0 0;will-change:transform;">$232.00</div><div class="a" style="left:1055.89px;top:659px;font-size:15px;line-height:15px;color:#4d5157;letter-spacing:0.196px;transform:scaleX(1.0218);transform-origin:0 0;will-change:transform;">$5.00</div><div class="a" style="left:1201.64px;top:659px;font-size:15px;line-height:15px;color:#4d5157;letter-spacing:0.195px;transform:scaleX(1.0256);transform-origin:0 0;will-change:transform;">$<span style="display:inline-block;transform:scaleX(.85);margin:0 -1.70px">1</span>,498.58</div><div class="a" style="left:1381.94px;top:659px;font-size:15px;line-height:15px;color:#4d5157;letter-spacing:0.195px;transform:scaleX(1.0257);transform-origin:0 0;will-change:transform;">$<span style="display:inline-block;transform:scaleX(.85);margin:0 -1.70px">1</span>90.9<span style="display:inline-block;transform:scaleX(.85);margin:0 -1.70px">1</span></div><div class="a" style="left:1464.14px;top:659px;font-size:15px;line-height:15px;color:#4d5157;letter-spacing:0.101px;transform:scaleX(1.0129);transform-origin:0 0;will-change:transform;">21 Apr 2024</div><svg class="a" style="left:1565px;top:661.5px;color:#d5d8dc;" width="14" height="13"><use href="#chat"/></svg><svg class="a" style="left:1586px;top:661px;color:#d5d8dc;" width="14" height="14"><use href="#cal"/></svg><svg class="a" style="left:1606px;top:661.5px;color:#d5d8dc;" width="16" height="13"><use href="#ppl"/></svg><svg class="a" style="left:1628px;top:661px;color:#d5d8dc;" width="14" height="13"><use href="#bank"/></svg><svg class="a" style="left:1650px;top:660px;color:#d5d8dc;" width="12" height="16"><use href="#rcpt"/></svg><svg class="a" style="left:1690.5px;top:661.5px;color:#2f8cdb;" width="13" height="15"><use href="#tsic"/></svg><div class="a" style="left:1707.63px;top:659px;font-size:15px;line-height:15px;color:#2f8cdb;letter-spacing:0.292px;transform:scaleX(1.0281);transform-origin:0 0;will-change:transform;">9379</div><div class="a" style="left:1804px;top:656px;width:92px;height:24px;border:1px solid #2f8cdb;border-radius:5px;background:#fff"></div><div class="a" style="left:1870px;top:656px;width:1px;height:24px;background:#2f8cdb"></div><svg class="a" style="left:1808.5px;top:661px;color:#2f8cdb;" width="15" height="15"><use href="#pdf"/></svg><div class="a" style="left:1828.89px;top:659px;font-size:15px;line-height:15px;color:#2f8cdb;letter-spacing:0.292px;transform:scaleX(1.0277);transform-origin:0 0;will-change:transform;">3844</div><svg class="a" style="left:1876.5px;top:665px" width="13" height="8" viewBox="0 0 13 8"><path d="M1 1.2L6.5 6.7L12 1.2" fill="none" stroke="#2f8cdb" stroke-width="1.4" stroke-linecap="round" stroke-linejoin="round"/></svg><div class="a" style="left:15px;top:715px;width:1890px;height:1px;background:#dde0e4"></div><div class="a" style="left:32px;top:691px;width:16px;height:16px;border:1.5px solid #505359;border-radius:4px;background:#fff"></div><svg class="a" style="left:80px;top:688px" width="24" height="24" viewBox="0 0 24 24"><g clip-path="url(#avc)"><g filter="url(#avb)"><rect width="24" height="24" fill="#b5beb8"/><path d="M4 24 L6 15 L18 15 L20 24z" fill="#f07e2e"/><circle cx="12" cy="9" r="4" fill="#eee9e4"/><rect x="8" y="4" width="8" height="3" fill="#f5f5f5"/></g></g></svg><div class="a" style="left:109.50px;top:690px;font-size:15px;line-height:15px;color:#3a8fd8;letter-spacing:0.453px;transform:scaleX(1.0631);transform-origin:0 0;will-change:transform;">Anna Hoffman (<span style="display:inline-block;transform:scaleX(.85);margin:0 -1.70px">1</span>9)</div><div class="a" style="left:536.69px;top:691px;font-size:15px;line-height:15px;color:#4d5157;letter-spacing:0.196px;transform:scaleX(1.0219);transform-origin:0 0;will-change:transform;">38.00</div><div class="a" style="left:685.79px;top:691px;font-size:15px;line-height:15px;color:#4d5157;letter-spacing:0.195px;transform:scaleX(1.0276);transform-origin:0 0;will-change:transform;">$2,<span style="display:inline-block;transform:scaleX(.85);margin:0 -1.70px">1</span><span style="display:inline-block;transform:scaleX(.85);margin:0 -1.70px">1</span>5.38</div><div class="a" style="left:857.04px;top:691px;font-size:15px;line-height:15px;color:#4d5157;letter-spacing:0.196px;transform:scaleX(1.0224);transform-origin:0 0;will-change:transform;">$364.00</div><div class="a" style="left:1055.89px;top:691px;font-size:15px;line-height:15px;color:#c5c8cd;letter-spacing:0.196px;transform:scaleX(1.0218);transform-origin:0 0;will-change:transform;">$0.00</div><div class="a" style="left:1205.04px;top:691px;font-size:15px;line-height:15px;color:#4d5157;letter-spacing:0.195px;transform:scaleX(1.0270);transform-origin:0 0;will-change:transform;">$<span style="display:inline-block;transform:scaleX(.85);margin:0 -1.70px">1</span>,75<span style="display:inline-block;transform:scaleX(.85);margin:0 -1.70px">1</span>.38</div><div class="a" style="left:1375.14px;top:691px;font-size:15px;line-height:15px;color:#4d5157;letter-spacing:0.196px;transform:scaleX(1.0224);transform-origin:0 0;will-change:transform;">$232.69</div><div class="a" style="left:1464.14px;top:691px;font-size:15px;line-height:15px;color:#4d5157;letter-spacing:0.101px;transform:scaleX(1.0129);transform-origin:0 0;will-change:transform;">21 Apr 2024</div><svg class="a" style="left:1565px;top:693.5px;color:#d5d8dc;" width="14" height="13"><use href="#chat"/></svg><svg class="a" style="left:1586px;top:693px;color:#d5d8dc;" width="14" height="14"><use href="#cal"/></svg><svg class="a" style="left:1606px;top:693.5px;color:#d5d8dc;" width="16" height="13"><use href="#ppl"/></svg><svg class="a" style="left:1628px;top:693px;color:#d5d8dc;" width="14" height="13"><use href="#bank"/></svg><svg class="a" style="left:1650px;top:692px;color:#d5d8dc;" width="12" height="16"><use href="#rcpt"/></svg><svg class="a" style="left:1690.5px;top:693.5px;color:#2f8cdb;" width="13" height="15"><use href="#tsic"/></svg><div class="a" style="left:1707.63px;top:691px;font-size:15px;line-height:15px;color:#2f8cdb;letter-spacing:0.292px;transform:scaleX(1.0281);transform-origin:0 0;will-change:transform;">9372</div><div class="a" style="left:1804px;top:688px;width:92px;height:24px;border:1px solid #2f8cdb;border-radius:5px;background:#fff"></div><div class="a" style="left:1870px;top:688px;width:1px;height:24px;background:#2f8cdb"></div><svg class="a" style="left:1808.5px;top:693px;color:#2f8cdb;" width="15" height="15"><use href="#pdf"/></svg><div class="a" style="left:1828.89px;top:691px;font-size:15px;line-height:15px;color:#2f8cdb;letter-spacing:0.292px;transform:scaleX(1.0279);transform-origin:0 0;will-change:transform;">3835</div><svg class="a" style="left:1876.5px;top:697px" width="13" height="8" viewBox="0 0 13 8"><path d="M1 1.2L6.5 6.7L12 1.2" fill="none" stroke="#2f8cdb" stroke-width="1.4" stroke-linecap="round" stroke-linejoin="round"/></svg><div class="a" style="left:15px;top:747px;width:1890px;height:1px;background:#dde0e4"></div><div class="a" style="left:32px;top:723px;width:16px;height:16px;border:1.5px solid #505359;border-radius:4px;background:#fff"></div><svg class="a" style="left:80px;top:720px" width="24" height="24" viewBox="0 0 24 24"><g clip-path="url(#avc)"><g filter="url(#avb)"><rect width="24" height="24" fill="#dcd8d2"/><ellipse cx="12" cy="17" rx="9" ry="6" fill="#4a4e52"/><circle cx="12" cy="9" r="3.6" fill="#caa486"/><rect x="9" y="5" width="6" height="2.2" fill="#25221f"/><rect x="6" y="18" width="13" height="6" fill="#5e4a3a"/></g></g></svg><div class="a" style="left:108.18px;top:722px;font-size:15px;line-height:15px;color:#3a8fd8;letter-spacing:0.415px;transform:scaleX(1.0551);transform-origin:0 0;will-change:transform;">Duc Nguyen (20)</div><div class="a" style="left:536.69px;top:723px;font-size:15px;line-height:15px;color:#4d5157;letter-spacing:0.196px;transform:scaleX(1.0219);transform-origin:0 0;will-change:transform;">38.00</div><div class="a" style="left:681.14px;top:723px;font-size:15px;line-height:15px;color:#4d5157;letter-spacing:0.195px;transform:scaleX(1.0256);transform-origin:0 0;will-change:transform;">$<span style="display:inline-block;transform:scaleX(.85);margin:0 -1.70px">1</span>,826.92</div><div class="a" style="left:857.04px;top:723px;font-size:15px;line-height:15px;color:#4d5157;letter-spacing:0.196px;transform:scaleX(1.0224);transform-origin:0 0;will-change:transform;">$264.00</div><div class="a" style="left:1055.89px;top:723px;font-size:15px;line-height:15px;color:#4d5157;letter-spacing:0.196px;transform:scaleX(1.0218);transform-origin:0 0;will-change:transform;">$5.00</div><div class="a" style="left:1201.64px;top:723px;font-size:15px;line-height:15px;color:#4d5157;letter-spacing:0.195px;transform:scaleX(1.0256);transform-origin:0 0;will-change:transform;">$<span style="display:inline-block;transform:scaleX(.85);margin:0 -1.70px">1</span>,557.92</div><div class="a" style="left:1375.14px;top:723px;font-size:15px;line-height:15px;color:#4d5157;letter-spacing:0.196px;transform:scaleX(1.0224);transform-origin:0 0;will-change:transform;">$200.96</div><div class="a" style="left:1464.14px;top:723px;font-size:15px;line-height:15px;color:#4d5157;letter-spacing:0.101px;transform:scaleX(1.0129);transform-origin:0 0;will-change:transform;">21 Apr 2024</div><svg class="a" style="left:1565px;top:725.5px;color:#d5d8dc;" width="14" height="13"><use href="#chat"/></svg><svg class="a" style="left:1586px;top:725px;color:#d5d8dc;" width="14" height="14"><use href="#cal"/></svg><svg class="a" style="left:1606px;top:725.5px;color:#d5d8dc;" width="16" height="13"><use href="#ppl"/></svg><svg class="a" style="left:1628px;top:725px;color:#d5d8dc;" width="14" height="13"><use href="#bank"/></svg><svg class="a" style="left:1650px;top:724px;color:#d5d8dc;" width="12" height="16"><use href="#rcpt"/></svg><svg class="a" style="left:1690.5px;top:725.5px;color:#2f8cdb;" width="13" height="15"><use href="#tsic"/></svg><div class="a" style="left:1707.63px;top:723px;font-size:15px;line-height:15px;color:#2f8cdb;letter-spacing:0.292px;transform:scaleX(1.0281);transform-origin:0 0;will-change:transform;">9380</div><div class="a" style="left:1804px;top:720px;width:92px;height:24px;border:1px solid #2f8cdb;border-radius:5px;background:#fff"></div><div class="a" style="left:1870px;top:720px;width:1px;height:24px;background:#2f8cdb"></div><svg class="a" style="left:1808.5px;top:725px;color:#2f8cdb;" width="15" height="15"><use href="#pdf"/></svg><div class="a" style="left:1828.89px;top:723px;font-size:15px;line-height:15px;color:#2f8cdb;letter-spacing:0.292px;transform:scaleX(1.0279);transform-origin:0 0;will-change:transform;">3850</div><svg class="a" style="left:1876.5px;top:729px" width="13" height="8" viewBox="0 0 13 8"><path d="M1 1.2L6.5 6.7L12 1.2" fill="none" stroke="#2f8cdb" stroke-width="1.4" stroke-linecap="round" stroke-linejoin="round"/></svg><div class="a" style="left:15px;top:779px;width:1890px;height:1px;background:#dde0e4"></div><div class="a" style="left:32px;top:755px;width:16px;height:16px;border:1.5px solid #505359;border-radius:4px;background:#fff"></div><svg class="a" style="left:80px;top:752px" width="24" height="24" viewBox="0 0 24 24"><g clip-path="url(#avc)"><g filter="url(#avb)"><rect width="24" height="24" fill="#b3c9dc"/><rect y="14" width="24" height="10" fill="#2f7f9b"/><rect y="18" width="24" height="6" fill="#1f6a86"/><rect x="15" y="3" width="4" height="2" fill="#c03040"/></g></g></svg><div class="a" style="left:108.71px;top:754px;font-size:15px;line-height:15px;color:#3a8fd8;letter-spacing:0.366px;transform:scaleX(1.0574);transform-origin:0 0;will-change:transform;">Carly Harkin (2<span style="display:inline-block;transform:scaleX(.85);margin:0 -1.70px">1</span>)</div><div class="a" style="left:536.69px;top:755px;font-size:15px;line-height:15px;color:#4d5157;letter-spacing:0.196px;transform:scaleX(1.0219);transform-origin:0 0;will-change:transform;">38.00</div><div class="a" style="left:681.14px;top:755px;font-size:15px;line-height:15px;color:#4d5157;letter-spacing:0.195px;transform:scaleX(1.0256);transform-origin:0 0;will-change:transform;">$<span style="display:inline-block;transform:scaleX(.85);margin:0 -1.70px">1</span>,538.46</div><div class="a" style="left:860.44px;top:755px;font-size:15px;line-height:15px;color:#4d5157;letter-spacing:0.195px;transform:scaleX(1.0240);transform-origin:0 0;will-change:transform;">$<span style="display:inline-block;transform:scaleX(.85);margin:0 -1.70px">1</span>88.00</div><div class="a" style="left:1055.89px;top:755px;font-size:15px;line-height:15px;color:#c5c8cd;letter-spacing:0.196px;transform:scaleX(1.0218);transform-origin:0 0;will-change:transform;">$0.00</div><div class="a" style="left:1201.64px;top:755px;font-size:15px;line-height:15px;color:#4d5157;letter-spacing:0.195px;transform:scaleX(1.0256);transform-origin:0 0;will-change:transform;">$<span style="display:inline-block;transform:scaleX(.85);margin:0 -1.70px">1</span>,350.46</div><div class="a" style="left:1378.54px;top:755px;font-size:15px;line-height:15px;color:#4d5157;letter-spacing:0.195px;transform:scaleX(1.0240);transform-origin:0 0;will-change:transform;">$<span style="display:inline-block;transform:scaleX(.85);margin:0 -1.70px">1</span>69.23</div><div class="a" style="left:1464.14px;top:755px;font-size:15px;line-height:15px;color:#4d5157;letter-spacing:0.101px;transform:scaleX(1.0129);transform-origin:0 0;will-change:transform;">21 Apr 2024</div><svg class="a" style="left:1565px;top:757.5px;color:#d5d8dc;" width="14" height="13"><use href="#chat"/></svg><svg class="a" style="left:1586px;top:757px;color:#d5d8dc;" width="14" height="14"><use href="#cal"/></svg><svg class="a" style="left:1606px;top:757.5px;color:#d5d8dc;" width="16" height="13"><use href="#ppl"/></svg><svg class="a" style="left:1628px;top:757px;color:#d5d8dc;" width="14" height="13"><use href="#bank"/></svg><svg class="a" style="left:1650px;top:756px;color:#d5d8dc;" width="12" height="16"><use href="#rcpt"/></svg><svg class="a" style="left:1690.5px;top:757.5px;color:#2f8cdb;" width="13" height="15"><use href="#tsic"/></svg><div class="a" style="left:1707.63px;top:755px;font-size:15px;line-height:15px;color:#2f8cdb;letter-spacing:0.292px;transform:scaleX(1.0281);transform-origin:0 0;will-change:transform;">9373</div><div class="a" style="left:1804px;top:752px;width:92px;height:24px;border:1px solid #2f8cdb;border-radius:5px;background:#fff"></div><div class="a" style="left:1870px;top:752px;width:1px;height:24px;background:#2f8cdb"></div><svg class="a" style="left:1808.5px;top:757px;color:#2f8cdb;" width="15" height="15"><use href="#pdf"/></svg><div class="a" style="left:1828.89px;top:755px;font-size:15px;line-height:15px;color:#2f8cdb;letter-spacing:0.292px;transform:scaleX(1.0279);transform-origin:0 0;will-change:transform;">3836</div><svg class="a" style="left:1876.5px;top:761px" width="13" height="8" viewBox="0 0 13 8"><path d="M1 1.2L6.5 6.7L12 1.2" fill="none" stroke="#2f8cdb" stroke-width="1.4" stroke-linecap="round" stroke-linejoin="round"/></svg><div class="a" style="left:15px;top:811px;width:1890px;height:1px;background:#dde0e4"></div><div class="a" style="left:32px;top:787px;width:16px;height:16px;border:1.5px solid #505359;border-radius:4px;background:#fff"></div><svg class="a" style="left:80px;top:784px" width="24" height="24" viewBox="0 0 24 24"><g clip-path="url(#avc)"><g filter="url(#avb)"><rect width="24" height="24" fill="#b0a496"/><circle cx="6" cy="6" r="3" fill="#ddd2c4"/><circle cx="15" cy="5" r="2.5" fill="#8a7e70"/><circle cx="19" cy="13" r="3" fill="#e4dacd"/><circle cx="8" cy="15" r="3" fill="#7f7366"/><circle cx="14" cy="20" r="3" fill="#d2c8bb"/><circle cx="4" cy="21" r="2" fill="#9a8e80"/></g></g></svg><div class="a" style="left:108.18px;top:786px;font-size:15px;line-height:15px;color:#3a8fd8;letter-spacing:0.371px;transform:scaleX(1.0545);transform-origin:0 0;will-change:transform;">Kara Willow (23)</div><div class="a" style="left:536.69px;top:787px;font-size:15px;line-height:15px;color:#4d5157;letter-spacing:0.196px;transform:scaleX(1.0219);transform-origin:0 0;will-change:transform;">38.00</div><div class="a" style="left:681.14px;top:787px;font-size:15px;line-height:15px;color:#4d5157;letter-spacing:0.195px;transform:scaleX(1.0256);transform-origin:0 0;will-change:transform;">$<span style="display:inline-block;transform:scaleX(.85);margin:0 -1.70px">1</span>,730.77</div><div class="a" style="left:857.04px;top:787px;font-size:15px;line-height:15px;color:#4d5157;letter-spacing:0.196px;transform:scaleX(1.0224);transform-origin:0 0;will-change:transform;">$230.00</div><div class="a" style="left:1055.89px;top:787px;font-size:15px;line-height:15px;color:#c5c8cd;letter-spacing:0.196px;transform:scaleX(1.0218);transform-origin:0 0;will-change:transform;">$0.00</div><div class="a" style="left:1201.64px;top:787px;font-size:15px;line-height:15px;color:#4d5157;letter-spacing:0.195px;transform:scaleX(1.0256);transform-origin:0 0;will-change:transform;">$<span style="display:inline-block;transform:scaleX(.85);margin:0 -1.70px">1</span>,500.77</div><div class="a" style="left:1378.54px;top:787px;font-size:15px;line-height:15px;color:#4d5157;letter-spacing:0.195px;transform:scaleX(1.0240);transform-origin:0 0;will-change:transform;">$<span style="display:inline-block;transform:scaleX(.85);margin:0 -1.70px">1</span>90.38</div><div class="a" style="left:1464.14px;top:787px;font-size:15px;line-height:15px;color:#4d5157;letter-spacing:0.101px;transform:scaleX(1.0129);transform-origin:0 0;will-change:transform;">21 Apr 2024</div><svg class="a" style="left:1565px;top:789.5px;color:#d5d8dc;" width="14" height="13"><use href="#chat"/></svg><svg class="a" style="left:1586px;top:789px;color:#d5d8dc;" width="14" height="14"><use href="#cal"/></svg><svg class="a" style="left:1606px;top:789.5px;color:#d5d8dc;" width="16" height="13"><use href="#ppl"/></svg><svg class="a" style="left:1628px;top:789px;color:#d5d8dc;" width="14" height="13"><use href="#bank"/></svg><svg class="a" style="left:1650px;top:788px;color:#d5d8dc;" width="12" height="16"><use href="#rcpt"/></svg><svg class="a" style="left:1690.5px;top:789.5px;color:#2f8cdb;" width="13" height="15"><use href="#tsic"/></svg><div class="a" style="left:1707.63px;top:787px;font-size:15px;line-height:15px;color:#2f8cdb;letter-spacing:0.292px;transform:scaleX(1.0279);transform-origin:0 0;will-change:transform;">9374</div><div class="a" style="left:1804px;top:784px;width:92px;height:24px;border:1px solid #2f8cdb;border-radius:5px;background:#fff"></div><div class="a" style="left:1870px;top:784px;width:1px;height:24px;background:#2f8cdb"></div><svg class="a" style="left:1808.5px;top:789px;color:#2f8cdb;" width="15" height="15"><use href="#pdf"/></svg><div class="a" style="left:1828.89px;top:787px;font-size:15px;line-height:15px;color:#2f8cdb;letter-spacing:0.292px;transform:scaleX(1.0277);transform-origin:0 0;will-change:transform;">3834</div><svg class="a" style="left:1876.5px;top:793px" width="13" height="8" viewBox="0 0 13 8"><path d="M1 1.2L6.5 6.7L12 1.2" fill="none" stroke="#2f8cdb" stroke-width="1.4" stroke-linecap="round" stroke-linejoin="round"/></svg><div class="a" style="left:15px;top:843px;width:1890px;height:1px;background:#dde0e4"></div><div class="a" style="left:32px;top:819px;width:16px;height:16px;border:1.5px solid #505359;border-radius:4px;background:#fff"></div><svg class="a" style="left:80px;top:816px" width="24" height="24" viewBox="0 0 24 24"><g clip-path="url(#avc)"><g filter="url(#avb)"><rect width="24" height="24" fill="#f7d1e6"/><ellipse cx="5" cy="17" rx="6" ry="5" fill="#d88a44"/><ellipse cx="8" cy="19" rx="4" ry="3" fill="#f4efe8"/></g></g></svg><div class="a" style="left:108.19px;top:818px;font-size:15px;line-height:15px;color:#3a8fd8;letter-spacing:0.358px;transform:scaleX(1.0471);transform-origin:0 0;will-change:transform;">Romeo Perepeper (27)</div><div class="a" style="left:536.69px;top:819px;font-size:15px;line-height:15px;color:#4d5157;letter-spacing:0.196px;transform:scaleX(1.0219);transform-origin:0 0;will-change:transform;">38.00</div><div class="a" style="left:681.14px;top:819px;font-size:15px;line-height:15px;color:#4d5157;letter-spacing:0.195px;transform:scaleX(1.0256);transform-origin:0 0;will-change:transform;">$<span style="display:inline-block;transform:scaleX(.85);margin:0 -1.70px">1</span>,865.39</div><div class="a" style="left:857.04px;top:819px;font-size:15px;line-height:15px;color:#4d5157;letter-spacing:0.196px;transform:scaleX(1.0224);transform-origin:0 0;will-change:transform;">$276.00</div><div class="a" style="left:1055.89px;top:819px;font-size:15px;line-height:15px;color:#c5c8cd;letter-spacing:0.196px;transform:scaleX(1.0218);transform-origin:0 0;will-change:transform;">$0.00</div><div class="a" style="left:1201.64px;top:819px;font-size:15px;line-height:15px;color:#4d5157;letter-spacing:0.195px;transform:scaleX(1.0256);transform-origin:0 0;will-change:transform;">$<span style="display:inline-block;transform:scaleX(.85);margin:0 -1.70px">1</span>,589.39</div><div class="a" style="left:1378.54px;top:819px;font-size:15px;line-height:15px;color:#4d5157;letter-spacing:0.195px;transform:scaleX(1.0240);transform-origin:0 0;will-change:transform;">$205.<span style="display:inline-block;transform:scaleX(.85);margin:0 -1.70px">1</span>9</div><div class="a" style="left:1464.14px;top:819px;font-size:15px;line-height:15px;color:#4d5157;letter-spacing:0.101px;transform:scaleX(1.0129);transform-origin:0 0;will-change:transform;">21 Apr 2024</div><svg class="a" style="left:1565px;top:821.5px;color:#d5d8dc;" width="14" height="13"><use href="#chat"/></svg><svg class="a" style="left:1586px;top:821px;color:#d5d8dc;" width="14" height="14"><use href="#cal"/></svg><svg class="a" style="left:1606px;top:821.5px;color:#d5d8dc;" width="16" height="13"><use href="#ppl"/></svg><svg class="a" style="left:1628px;top:821px;color:#d5d8dc;" width="14" height="13"><use href="#bank"/></svg><svg class="a" style="left:1650px;top:820px;color:#d5d8dc;" width="12" height="16"><use href="#rcpt"/></svg><svg class="a" style="left:1690.5px;top:821.5px;color:#2f8cdb;" width="13" height="15"><use href="#tsic"/></svg><div class="a" style="left:1707.63px;top:819px;font-size:15px;line-height:15px;color:#2f8cdb;letter-spacing:0.292px;transform:scaleX(1.0281);transform-origin:0 0;will-change:transform;">9363</div><div class="a" style="left:1804px;top:816px;width:92px;height:24px;border:1px solid #2f8cdb;border-radius:5px;background:#fff"></div><div class="a" style="left:1870px;top:816px;width:1px;height:24px;background:#2f8cdb"></div><svg class="a" style="left:1808.5px;top:821px;color:#2f8cdb;" width="15" height="15"><use href="#pdf"/></svg><div class="a" style="left:1828.88px;top:819px;font-size:15px;line-height:15px;color:#2f8cdb;letter-spacing:0.291px;transform:scaleX(1.0312);transform-origin:0 0;will-change:transform;">384<span style="display:inline-block;transform:scaleX(.85);margin:0 -1.70px">1</span></div><svg class="a" style="left:1876.5px;top:825px" width="13" height="8" viewBox="0 0 13 8"><path d="M1 1.2L6.5 6.7L12 1.2" fill="none" stroke="#2f8cdb" stroke-width="1.4" stroke-linecap="round" stroke-linejoin="round"/></svg><div class="a" style="left:15px;top:875px;width:1890px;height:1px;background:#dde0e4"></div><div class="a" style="left:32px;top:851px;width:16px;height:16px;border:1.5px solid #505359;border-radius:4px;background:#fff"></div><svg class="a" style="left:80px;top:848px" width="24" height="24" viewBox="0 0 24 24"><g clip-path="url(#avc)"><g filter="url(#avb)"><rect width="24" height="24" fill="#d6dadc"/><rect x="0" y="4" width="10" height="8" fill="#f4f4f4"/><rect x="0" y="14" width="12" height="10" fill="#9ca2a6"/><ellipse cx="16" cy="21" rx="7" ry="7" fill="#1b1d1f"/><circle cx="15" cy="11" r="3.2" fill="#6a4a3a"/></g></g></svg><div class="a" style="left:108.19px;top:850px;font-size:15px;line-height:15px;color:#3a8fd8;letter-spacing:0.312px;transform:scaleX(1.0475);transform-origin:0 0;will-change:transform;">Bailey Perkins (35)</div><div class="a" style="left:536.69px;top:851px;font-size:15px;line-height:15px;color:#4d5157;letter-spacing:0.196px;transform:scaleX(1.0219);transform-origin:0 0;will-change:transform;">38.00</div><div class="a" style="left:684.54px;top:851px;font-size:15px;line-height:15px;color:#4d5157;letter-spacing:0.195px;transform:scaleX(1.0270);transform-origin:0 0;will-change:transform;">$<span style="display:inline-block;transform:scaleX(.85);margin:0 -1.70px">1</span>,442.3<span style="display:inline-block;transform:scaleX(.85);margin:0 -1.70px">1</span></div><div class="a" style="left:860.44px;top:851px;font-size:15px;line-height:15px;color:#4d5157;letter-spacing:0.195px;transform:scaleX(1.0240);transform-origin:0 0;will-change:transform;">$<span style="display:inline-block;transform:scaleX(.85);margin:0 -1.70px">1</span>66.00</div><div class="a" style="left:1055.89px;top:851px;font-size:15px;line-height:15px;color:#c5c8cd;letter-spacing:0.196px;transform:scaleX(1.0218);transform-origin:0 0;will-change:transform;">$0.00</div><div class="a" style="left:1205.04px;top:851px;font-size:15px;line-height:15px;color:#4d5157;letter-spacing:0.195px;transform:scaleX(1.0270);transform-origin:0 0;will-change:transform;">$<span style="display:inline-block;transform:scaleX(.85);margin:0 -1.70px">1</span>,276.3<span style="display:inline-block;transform:scaleX(.85);margin:0 -1.70px">1</span></div><div class="a" style="left:1378.54px;top:851px;font-size:15px;line-height:15px;color:#4d5157;letter-spacing:0.195px;transform:scaleX(1.0240);transform-origin:0 0;will-change:transform;">$<span style="display:inline-block;transform:scaleX(.85);margin:0 -1.70px">1</span>58.65</div><div class="a" style="left:1464.14px;top:851px;font-size:15px;line-height:15px;color:#4d5157;letter-spacing:0.101px;transform:scaleX(1.0129);transform-origin:0 0;will-change:transform;">21 Apr 2024</div><svg class="a" style="left:1565px;top:853.5px;color:#d5d8dc;" width="14" height="13"><use href="#chat"/></svg><svg class="a" style="left:1586px;top:853px;color:#d5d8dc;" width="14" height="14"><use href="#cal"/></svg><svg class="a" style="left:1606px;top:853.5px;color:#d5d8dc;" width="16" height="13"><use href="#ppl"/></svg><svg class="a" style="left:1628px;top:853px;color:#d5d8dc;" width="14" height="13"><use href="#bank"/></svg><svg class="a" style="left:1650px;top:852px;color:#d5d8dc;" width="12" height="16"><use href="#rcpt"/></svg><svg class="a" style="left:1690.5px;top:853.5px;color:#2f8cdb;" width="13" height="15"><use href="#tsic"/></svg><div class="a" style="left:1707.63px;top:851px;font-size:15px;line-height:15px;color:#2f8cdb;letter-spacing:0.292px;transform:scaleX(1.0279);transform-origin:0 0;will-change:transform;">9364</div><div class="a" style="left:1804px;top:848px;width:92px;height:24px;border:1px solid #2f8cdb;border-radius:5px;background:#fff"></div><div class="a" style="left:1870px;top:848px;width:1px;height:24px;background:#2f8cdb"></div><svg class="a" style="left:1808.5px;top:853px;color:#2f8cdb;" width="15" height="15"><use href="#pdf"/></svg><div class="a" style="left:1828.88px;top:851px;font-size:15px;line-height:15px;color:#2f8cdb;letter-spacing:0.291px;transform:scaleX(1.0312);transform-origin:0 0;will-change:transform;">385<span style="display:inline-block;transform:scaleX(.85);margin:0 -1.70px">1</span></div><svg class="a" style="left:1876.5px;top:857px" width="13" height="8" viewBox="0 0 13 8"><path d="M1 1.2L6.5 6.7L12 1.2" fill="none" stroke="#2f8cdb" stroke-width="1.4" stroke-linecap="round" stroke-linejoin="round"/></svg><div class="a" style="left:15px;top:907px;width:1890px;height:1px;background:#dde0e4"></div><div class="a" style="left:32px;top:883px;width:16px;height:16px;border:1.5px solid #505359;border-radius:4px;background:#fff"></div><svg class="a" style="left:80px;top:880px" width="24" height="24" viewBox="0 0 24 24"><g clip-path="url(#avc)"><g filter="url(#avb)"><rect width="24" height="24" fill="#a9b7bd"/><rect x="0" y="0" width="24" height="6" fill="#d0d8dc"/><rect x="3" y="6" width="2" height="14" fill="#e8eef0"/><rect x="18" y="6" width="2" height="14" fill="#e8eef0"/><rect y="16" width="24" height="8" fill="#5a666c"/><ellipse cx="12" cy="22" rx="5" ry="5" fill="#1a1e22"/><circle cx="12" cy="14" r="2.5" fill="#7a5a48"/></g></g></svg><div class="a" style="left:108.16px;top:882px;font-size:15px;line-height:15px;color:#3a8fd8;letter-spacing:0.507px;transform:scaleX(1.0728);transform-origin:0 0;will-change:transform;">Nathan Jordan (39)</div><div class="a" style="left:536.69px;top:883px;font-size:15px;line-height:15px;color:#4d5157;letter-spacing:0.196px;transform:scaleX(1.0219);transform-origin:0 0;will-change:transform;">38.00</div><div class="a" style="left:684.54px;top:883px;font-size:15px;line-height:15px;color:#4d5157;letter-spacing:0.195px;transform:scaleX(1.0270);transform-origin:0 0;will-change:transform;">$<span style="display:inline-block;transform:scaleX(.85);margin:0 -1.70px">1</span>,442.3<span style="display:inline-block;transform:scaleX(.85);margin:0 -1.70px">1</span></div><div class="a" style="left:860.44px;top:883px;font-size:15px;line-height:15px;color:#4d5157;letter-spacing:0.195px;transform:scaleX(1.0240);transform-origin:0 0;will-change:transform;">$<span style="display:inline-block;transform:scaleX(.85);margin:0 -1.70px">1</span>66.00</div><div class="a" style="left:1055.89px;top:883px;font-size:15px;line-height:15px;color:#c5c8cd;letter-spacing:0.196px;transform:scaleX(1.0218);transform-origin:0 0;will-change:transform;">$0.00</div><div class="a" style="left:1205.04px;top:883px;font-size:15px;line-height:15px;color:#4d5157;letter-spacing:0.195px;transform:scaleX(1.0270);transform-origin:0 0;will-change:transform;">$<span style="display:inline-block;transform:scaleX(.85);margin:0 -1.70px">1</span>,276.3<span style="display:inline-block;transform:scaleX(.85);margin:0 -1.70px">1</span></div><div class="a" style="left:1378.54px;top:883px;font-size:15px;line-height:15px;color:#4d5157;letter-spacing:0.195px;transform:scaleX(1.0240);transform-origin:0 0;will-change:transform;">$<span style="display:inline-block;transform:scaleX(.85);margin:0 -1.70px">1</span>58.65</div><div class="a" style="left:1464.14px;top:883px;font-size:15px;line-height:15px;color:#4d5157;letter-spacing:0.101px;transform:scaleX(1.0129);transform-origin:0 0;will-change:transform;">21 Apr 2024</div><svg class="a" style="left:1565px;top:885.5px;color:#d5d8dc;" width="14" height="13"><use href="#chat"/></svg><svg class="a" style="left:1586px;top:885px;color:#d5d8dc;" width="14" height="14"><use href="#cal"/></svg><svg class="a" style="left:1606px;top:885.5px;color:#d5d8dc;" width="16" height="13"><use href="#ppl"/></svg><svg class="a" style="left:1628px;top:885px;color:#d5d8dc;" width="14" height="13"><use href="#bank"/></svg><svg class="a" style="left:1650px;top:884px;color:#d5d8dc;" width="12" height="16"><use href="#rcpt"/></svg><svg class="a" style="left:1690.5px;top:885.5px;color:#2f8cdb;" width="13" height="15"><use href="#tsic"/></svg><div class="a" style="left:1707.63px;top:883px;font-size:15px;line-height:15px;color:#2f8cdb;letter-spacing:0.292px;transform:scaleX(1.0281);transform-origin:0 0;will-change:transform;">9365</div><div class="a" style="left:1804px;top:880px;width:92px;height:24px;border:1px solid #2f8cdb;border-radius:5px;background:#fff"></div><div class="a" style="left:1870px;top:880px;width:1px;height:24px;background:#2f8cdb"></div><svg class="a" style="left:1808.5px;top:885px;color:#2f8cdb;" width="15" height="15"><use href="#pdf"/></svg><div class="a" style="left:1828.89px;top:883px;font-size:15px;line-height:15px;color:#2f8cdb;letter-spacing:0.292px;transform:scaleX(1.0279);transform-origin:0 0;will-change:transform;">3842</div><svg class="a" style="left:1876.5px;top:889px" width="13" height="8" viewBox="0 0 13 8"><path d="M1 1.2L6.5 6.7L12 1.2" fill="none" stroke="#2f8cdb" stroke-width="1.4" stroke-linecap="round" stroke-linejoin="round"/></svg><div class="a" style="left:15px;top:908px;width:1890px;height:32px;background:#f3f4f6"></div><div class="a" style="left:524.05px;top:917px;font-size:14px;line-height:14px;font-weight:700;color:#6e7278;letter-spacing:0.808px;transform:scaleX(1.1072);transform-origin:0 0;will-change:transform;">760.00</div><div class="a" style="left:664.23px;top:917px;font-size:14px;line-height:14px;font-weight:700;color:#6e7278;letter-spacing:0.670px;transform:scaleX(1.0950);transform-origin:0 0;will-change:transform;">$40,634.61</div><div class="a" style="left:836.22px;top:917px;font-size:14px;line-height:14px;font-weight:700;color:#6e7278;letter-spacing:0.846px;transform:scaleX(1.1236);transform-origin:0 0;will-change:transform;">$6,886.00</div><div class="a" style="left:1042.02px;top:917px;font-size:14px;line-height:14px;font-weight:700;color:#6e7278;letter-spacing:0.910px;transform:scaleX(1.1214);transform-origin:0 0;will-change:transform;">$30.00</div><div class="a" style="left:1183.22px;top:917px;font-size:14px;line-height:14px;font-weight:700;color:#6e7278;letter-spacing:0.750px;transform:scaleX(1.1079);transform-origin:0 0;will-change:transform;">$33,564.76</div><div class="a" style="left:1355.02px;top:917px;font-size:14px;line-height:14px;font-weight:700;color:#6e7278;letter-spacing:0.798px;transform:scaleX(1.1154);transform-origin:0 0;will-change:transform;">$4,623.65</div><div class="a" style="left:1733px;top:219px;width:173px;height:134px;background:#fff;border-radius:5px;box-shadow:0 1px 6px rgba(0,0,0,.18)"></div><svg class="a" style="left:1747px;top:234px;color:#444;" width="13" height="13"><use href="#plus"/></svg><div class="a" style="left:1768.39px;top:232px;font-size:14.5px;line-height:14.5px;color:#5c5f64;letter-spacing:0.343px;transform:scaleX(1.0517);transform-origin:0 0;will-change:transform;">Payslips template</div><svg class="a" style="left:1747px;top:266px;color:#444;" width="13" height="13"><use href="#plus"/></svg><div class="a" style="left:1768.45px;top:264px;font-size:14.5px;line-height:14.5px;color:#5c5f64;letter-spacing:0.000px;transform:scaleX(1.0000);transform-origin:0 0;will-change:transform;">ETP</div><svg class="a" style="left:1747px;top:297px;color:#444;" width="12" height="14"><use href="#fdl"/></svg><div class="a" style="left:1769.70px;top:296px;font-size:14.5px;line-height:14.5px;color:#5c5f64;letter-spacing:0.282px;transform:scaleX(1.0361);transform-origin:0 0;will-change:transform;">Allowances</div><svg class="a" style="left:1747px;top:329px;color:#444;" width="12" height="14"><use href="#fdl"/></svg><div class="a" style="left:1768.38px;top:328px;font-size:14.5px;line-height:14.5px;color:#5c5f64;letter-spacing:0.433px;transform:scaleX(1.0583);transform-origin:0 0;will-change:transform;">Deductions</div><div class="obox" style="left:1732px;top:322px;width:175px;height:35px"></div><div class="a" style="left:1877px;top:183px;width:24px;height:26px;overflow:hidden"><svg style="position:absolute;left:4.6px;top:13.4px" width="19" height="20" viewBox="0 0 16 17"><path d="M3.5 9.3V2.2a1.35 1.35 0 0 1 2.7 0V6.3a1.2 1.2 0 0 1 2.4.2a1.2 1.2 0 0 1 2.3.5a1.2 1.2 0 0 1 2.3.7V11c0 2.3-1.5 4.2-3.6 4.2H7.5c-1.2 0-2-.5-2.7-1.4L1.2 9.6a1.1 1.1 0 0 1 1.6-1.5z" fill="#fff" stroke="#111" stroke-width="1.1" stroke-linejoin="round"/><path d="M7.6 11.6v2.2M9.3 11.6v2.2M11 11.6v2.2" stroke="#777" stroke-width=".8"/></svg></div></body></html>
